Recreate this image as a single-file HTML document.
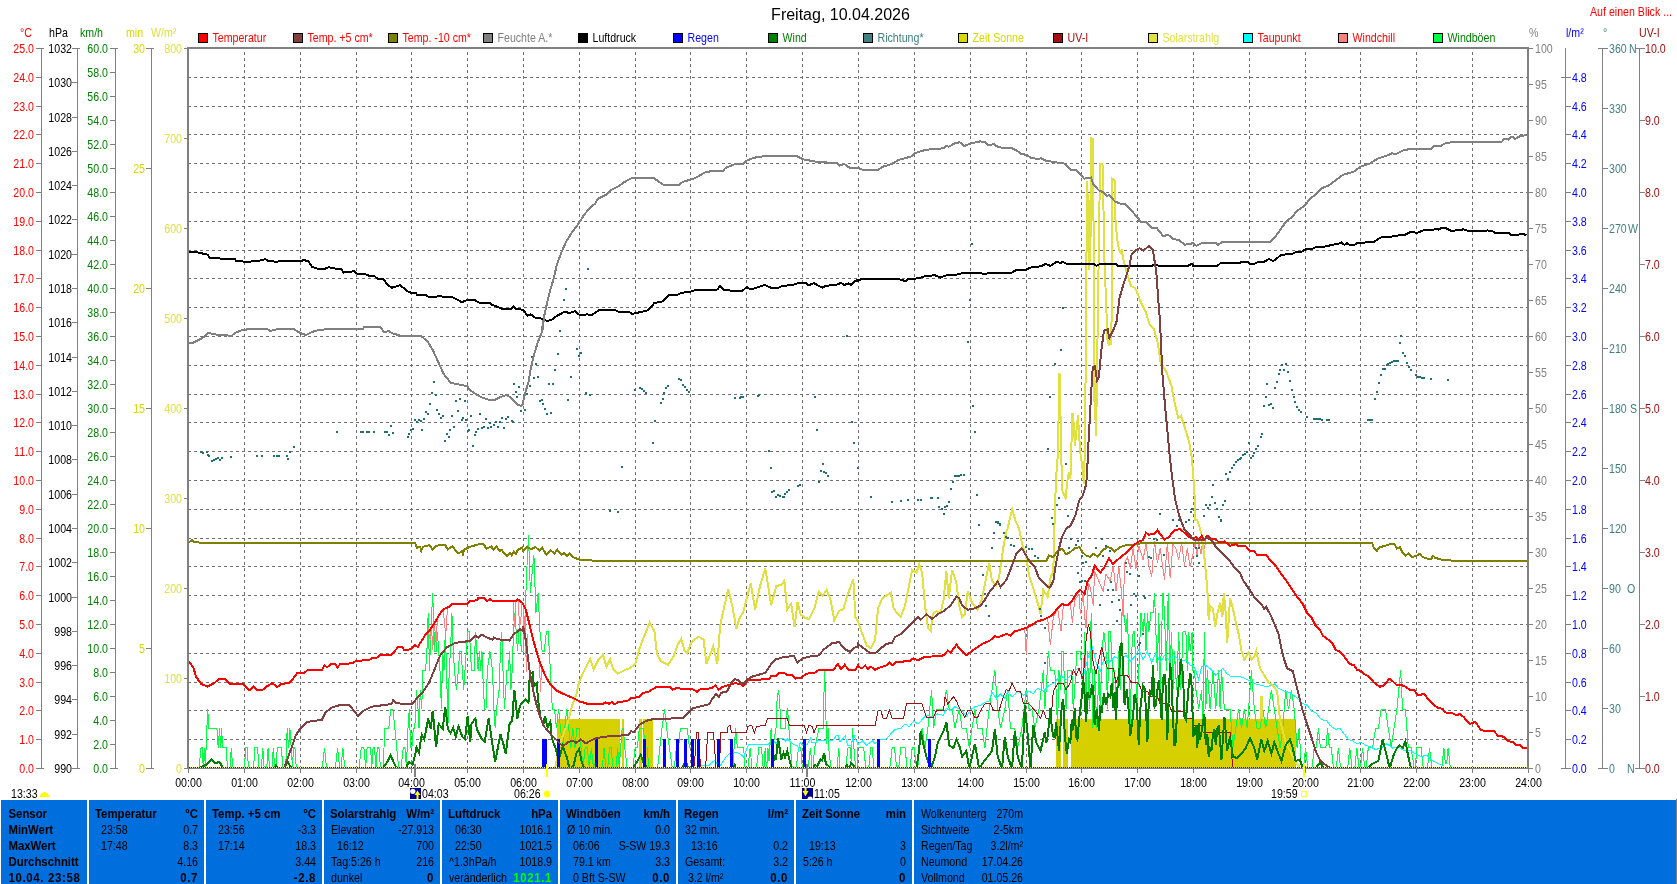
<!DOCTYPE html>
<html lang="de"><head><meta charset="utf-8"><title>Freitag, 10.04.2026</title>
<style>
html,body{margin:0;padding:0;background:#fff;}
body{width:1677px;height:884px;overflow:hidden;font-family:"Liberation Sans",sans-serif;}
svg{display:block;will-change:transform;}
svg text{white-space:pre;}
</style></head><body>
<svg width="1677" height="884" viewBox="0 0 1677 884" font-family='"Liberation Sans", sans-serif' shape-rendering="crispEdges">
<g stroke="#707070" stroke-width="1" stroke-dasharray="3,3">
<line x1="244.5" y1="49" x2="244.5" y2="767" stroke-dashoffset="3"/>
<line x1="300.5" y1="49" x2="300.5" y2="767" stroke-dashoffset="3"/>
<line x1="356.5" y1="49" x2="356.5" y2="767" stroke-dashoffset="3"/>
<line x1="411.5" y1="49" x2="411.5" y2="767" stroke-dashoffset="3"/>
<line x1="467.5" y1="49" x2="467.5" y2="767" stroke-dashoffset="3"/>
<line x1="523.5" y1="49" x2="523.5" y2="767" stroke-dashoffset="3"/>
<line x1="579.5" y1="49" x2="579.5" y2="767" stroke-dashoffset="3"/>
<line x1="635.5" y1="49" x2="635.5" y2="767" stroke-dashoffset="3"/>
<line x1="690.5" y1="49" x2="690.5" y2="767" stroke-dashoffset="3"/>
<line x1="746.5" y1="49" x2="746.5" y2="767" stroke-dashoffset="3"/>
<line x1="802.5" y1="49" x2="802.5" y2="767" stroke-dashoffset="3"/>
<line x1="858.5" y1="49" x2="858.5" y2="767" stroke-dashoffset="3"/>
<line x1="914.5" y1="49" x2="914.5" y2="767" stroke-dashoffset="3"/>
<line x1="970.5" y1="49" x2="970.5" y2="767" stroke-dashoffset="3"/>
<line x1="1026.5" y1="49" x2="1026.5" y2="767" stroke-dashoffset="3"/>
<line x1="1081.5" y1="49" x2="1081.5" y2="767" stroke-dashoffset="3"/>
<line x1="1137.5" y1="49" x2="1137.5" y2="767" stroke-dashoffset="3"/>
<line x1="1193.5" y1="49" x2="1193.5" y2="767" stroke-dashoffset="3"/>
<line x1="1249.5" y1="49" x2="1249.5" y2="767" stroke-dashoffset="3"/>
<line x1="1305.5" y1="49" x2="1305.5" y2="767" stroke-dashoffset="3"/>
<line x1="1360.5" y1="49" x2="1360.5" y2="767" stroke-dashoffset="3"/>
<line x1="1416.5" y1="49" x2="1416.5" y2="767" stroke-dashoffset="3"/>
<line x1="1472.5" y1="49" x2="1472.5" y2="767" stroke-dashoffset="3"/>
<line x1="188" y1="77.5" x2="1527" y2="77.5"/>
<line x1="188" y1="106.5" x2="1527" y2="106.5"/>
<line x1="188" y1="134.5" x2="1527" y2="134.5"/>
<line x1="188" y1="163.5" x2="1527" y2="163.5"/>
<line x1="188" y1="192.5" x2="1527" y2="192.5"/>
<line x1="188" y1="221.5" x2="1527" y2="221.5"/>
<line x1="188" y1="250.5" x2="1527" y2="250.5"/>
<line x1="188" y1="278.5" x2="1527" y2="278.5"/>
<line x1="188" y1="307.5" x2="1527" y2="307.5"/>
<line x1="188" y1="336.5" x2="1527" y2="336.5"/>
<line x1="188" y1="365.5" x2="1527" y2="365.5"/>
<line x1="188" y1="394.5" x2="1527" y2="394.5"/>
<line x1="188" y1="422.5" x2="1527" y2="422.5"/>
<line x1="188" y1="451.5" x2="1527" y2="451.5"/>
<line x1="188" y1="480.5" x2="1527" y2="480.5"/>
<line x1="188" y1="509.5" x2="1527" y2="509.5"/>
<line x1="188" y1="538.5" x2="1527" y2="538.5"/>
<line x1="188" y1="566.5" x2="1527" y2="566.5"/>
<line x1="188" y1="595.5" x2="1527" y2="595.5"/>
<line x1="188" y1="624.5" x2="1527" y2="624.5"/>
<line x1="188" y1="653.5" x2="1527" y2="653.5"/>
<line x1="188" y1="682.5" x2="1527" y2="682.5"/>
<line x1="188" y1="710.5" x2="1527" y2="710.5"/>
<line x1="188" y1="739.5" x2="1527" y2="739.5"/>
</g>
<rect x="557" y="719" width="63" height="48.5" fill="#D6D000"/>
<rect x="621.5" y="719" width="2" height="48.5" fill="#D6D000"/>
<rect x="639" y="719" width="3" height="48.5" fill="#D6D000"/>
<rect x="643" y="719" width="10" height="48.5" fill="#D6D000"/>
<rect x="1056" y="719" width="5" height="48.5" fill="#D6D000"/>
<rect x="1063" y="719" width="4.5" height="48.5" fill="#D6D000"/>
<rect x="1070.5" y="719" width="225.5" height="48.5" fill="#D6D000"/>
<clipPath id="cp"><rect x="189" y="49" width="1338" height="718"/></clipPath>
<g clip-path="url(#cp)">
<polyline points="188,767 199,767 201.1,747.7 202.4,747.7 203.2,767 204.3,747.7 205.3,767 206.9,728.4 207.7,709.1 209,728.4 216.9,728.4 218.2,747.7 219.5,728.4 220.8,747.7 221.6,728.4 222.7,747.7 226.1,747.7 227.4,767 230,767 231.3,747.7 232.6,767 244.4,767 245.8,747.7 247.1,747.7 248.4,767 253.6,767 254.9,747.7 257.6,747.7 258.9,767 261.5,767 262.8,747.7 264.1,767 266.8,767 268.1,747.7 269.4,767 272,767 273.3,747.7 274.6,767 276,767 277.3,747.7 281.2,747.7 283,767 285.7,767 287.2,728.4 288.6,747.7 289.9,728.4 291.2,747.7 292.5,767 293.5,747.7 294.9,747.7 296.2,767 322.4,767 324.5,747.7 326.4,767 335.5,767 337.6,747.7 339.5,767 341.1,767 342.9,747.7 344.7,767 359.2,767 361.3,747.7 363.9,747.7 365.7,767 367.1,747.7 370.5,747.7 371.8,767 373.1,747.7 374.4,747.7 376,767 377.3,747.7 378.9,747.7 380.4,767 383.1,767 384.9,728.4 388.8,728.4 390.7,709.1 392.8,709.1 394.9,728.4 396.7,747.7 398.6,767 401.2,767 403.3,747.7 404.9,747.7 406.4,767 408,728.4 409.3,709.1 410.6,747.7 411.9,747.7 413.3,728.4 414.8,728.4 416.4,689.8 418,709.1 419,728.4 420.3,689.8 421.7,709.1 423,670.5 425.6,670.5 426.9,651.2 428.2,612.6 429.5,670.5 430.8,631.9 432.7,593.3 434,631.9 434.8,651.2 436.1,651.2 437.4,631.9 438.7,651.2 440,670.5 441.4,709.1 442.7,651.2 444,670.5 445.3,631.9 446.6,670.5 447.9,728.4 449.2,670.5 450.5,651.2 451.9,612.6 453.2,651.2 454.5,670.5 456.4,689.8 458.4,670.5 459.7,651.2 461,651.2 462.4,670.5 463.7,689.8 465,670.5 466.3,651.2 467.6,631.9 469.4,631.9 471.5,670.5 474.2,670.5 475.5,631.9 476.8,651.2 478.1,670.5 479.4,651.2 480.7,670.5 482,651.2 483.4,689.8 484.7,709.1 486,709.1 487.3,670.5 489.9,651.2 492.5,670.5 493.9,709.1 495.2,728.4 496.5,709.1 499.1,689.8 500.4,651.2 501.7,631.9 503,670.5 504.4,709.1 505.7,689.8 507,670.5 508.3,670.5 509.6,651.2 510.9,689.8 512.2,670.5 513.5,631.9 514.9,612.6 516.2,631.9 517.5,651.2 518.8,631.9 520.1,631.9 521.4,651.2 522.5,651.2 523,651.2 525.2,612.6 526.6,574 528.5,535.4 530.4,593.3 532,574 533.9,554.7 535.9,612.6 538.1,593.3 540,631.9 542.2,651.2 544.3,651.2 546.3,631.9 548.2,631.9 550.4,670.5 552.3,709.1 554.5,709.1 556.4,728.4 558.6,709.1 560.5,728.4 562.7,747.7 564.6,728.4 566.8,709.1 568.7,728.4 570.9,747.7 572.8,728.4 575,747.7 576.9,728.4 579.1,728.4 581,747.7 583.2,767 585.1,747.7 587.3,747.7 589.2,767 591.4,747.7 593.3,767 594.7,767 596.1,747.7 597.7,767 602.4,767 604,747.7 605.7,767 607.8,767 609.5,747.7 611.1,747.7 612.8,767 616.1,767 617.7,747.7 619.3,767 620.7,747.7 622.1,728.4 623.4,728.4 624.8,747.7 627,767 633,767 635.2,747.7 637.4,747.7 639.3,728.4 643.4,728.4 645.3,747.7 647,747.7 648.9,767 657.7,767 659.8,747.7 662,728.4 664.5,709.1 666.7,728.4 669.4,747.7 672.2,767 674.4,767 676.3,747.7 678.5,747.7 680.4,728.4 687.2,728.4 689.4,747.7 691.3,747.7 693.2,767 733,767 734.1,747.7 735.7,728.4 737.3,747.7 743.7,747.7 744.8,767 748,767 750.2,747.7 751.8,767 756.6,767 758.8,747.7 761.5,747.7 763.1,767 764.1,767 765.2,747.7 766.3,767 766.8,767 767.9,747.7 769,761.2 771.1,728.4 772.7,747.7 774.4,738 776,728.4 777,701.4 778.4,689.8 779.7,701.4 780.8,728.4 785.1,728.4 786.7,711 787.6,709.1 788.9,728.4 790.5,747.7 792.1,767 796.4,767 798.5,747.7 800.7,747.7 802.3,767 808.2,767 810.4,747.7 812,767 813,767 814.7,747.7 819,728.4 823.3,728.4 823.8,701.4 824.5,670.5 825.4,691.7 826.5,743.8 828.1,728.4 828.6,747.7 830.8,767 837.2,767 838.8,747.7 839.9,767 845.8,767 848,747.7 850.1,747.7 851.2,761.2 852.5,728.4 853.9,747.7 855.5,767 857.1,767 857.6,755.4 858,747.7 863.7,747.7 865.7,767 868.8,767 870.8,747.7 872.3,747.7 873.7,767 889.9,767 892.2,747.7 894.5,747.7 896.5,767 898.8,767 900.8,747.7 905,747.7 907,767 910.2,767 912.2,747.7 914.2,747.7 916.4,767 917.9,767 919.3,747.7 922.1,728.4 925,747.7 927.9,728.4 931.6,689.8 933.6,728.4 936.4,709.1 940.7,709.1 943.5,709.1 946.4,689.8 949.2,709.1 952.1,709.1 954.9,728.4 959.2,709.1 962.1,728.4 966.3,728.4 969.2,747.7 972,728.4 974.9,709.1 977.7,728.4 982,728.4 984.9,747.7 989.1,709.1 992,689.8 994.9,670.5 997.7,709.1 1000.6,728.4 1004.8,709.1 1007.7,689.8 1010.5,728.4 1014.8,728.4 1017.7,747.7 1021.9,728.4 1026.2,689.8 1029.1,709.1 1031.9,709.1 1034.8,728.4 1039,709.1 1043.3,670.5 1044.8,709.1 1046.2,689.8 1048.3,651.2 1050.4,670.5 1051.8,670.5 1053.3,670.5 1054.7,670.5 1056.1,689.8 1057.5,728.4 1059,670.5 1060.5,689.8 1061.9,651.2 1063.3,651.2 1064.7,689.8 1066.2,709.1 1067.6,670.5 1069.7,670.5 1071.8,670.5 1073.2,709.1 1074.7,689.8 1076.8,651.2 1079,651.2 1080.4,651.2 1081.8,670.5 1083.2,689.8 1084.7,631.9 1086.1,709.1 1087.5,651.2 1089.3,709.1 1091.2,612.6 1092.9,728.4 1094.6,670.5 1096.8,728.4 1098.9,670.5 1100.3,709.1 1101.8,651.2 1103.9,631.9 1106,651.2 1107.5,709.1 1108.9,631.9 1110.3,631.9 1111.7,651.2 1113.2,689.8 1114.6,670.5 1116.8,709.1 1118.9,651.2 1120.3,689.8 1121.7,612.6 1123.8,612.6 1126,631.9 1127.5,612.6 1128.9,670.5 1130.3,728.4 1131.7,651.2 1133.2,631.9 1134.6,631.9 1136.7,709.1 1138.8,670.5 1140.9,612.6 1143.1,631.9 1144.5,612.6 1146,651.2 1147.4,612.6 1148.8,631.9 1150.9,612.6 1153.1,612.6 1154.5,593.3 1155.9,631.9 1157.3,670.5 1158.8,612.6 1160.2,689.8 1161.6,631.9 1163,593.3 1164.5,612.6 1166.3,670.5 1168.2,593.3 1169.9,670.5 1171.6,631.9 1173,689.8 1174.5,651.2 1176.6,689.8 1178.7,631.9 1180.8,689.8 1183,631.9 1184.5,631.9 1185.9,631.9 1187.3,670.5 1188.7,631.9 1190.4,651.2 1192.1,631.9 1193,670.5 1194.5,670.5 1195.9,689.8 1198.7,709.1 1201.6,689.8 1203,728.4 1204.4,631.9 1205.8,709.1 1207.3,670.5 1210.1,709.1 1213,670.5 1215.8,709.1 1218.7,670.5 1220.1,709.1 1221.5,670.5 1224.4,709.1 1227.2,709.1 1230.1,709.1 1232.9,747.7 1235.8,728.4 1238.6,709.1 1241.5,728.4 1244.3,709.1 1247.2,728.4 1251.4,670.5 1254.3,709.1 1257.1,728.4 1260,728.4 1262.9,709.1 1265.7,728.4 1268.6,709.1 1271.4,689.8 1274.3,709.1 1277.1,728.4 1280,747.7 1282.8,728.4 1285.7,689.8 1288.5,709.1 1291.4,689.8 1294.2,709.1 1297.1,747.7 1299.1,728.4 1301.3,767 1303.6,767 1305.6,747.7 1307.6,767 1312.2,767 1314.2,747.7 1316.2,747.7 1318.4,728.4 1320.4,747.7 1324.1,747.7 1325.9,747.7 1327.6,728.4 1329.3,747.7 1331.3,747.7 1333.3,767 1336.4,767 1338.4,747.7 1340.4,767 1347.8,767 1349.8,747.7 1351.8,767 1354.9,767 1356.9,747.7 1358.9,767 1360.6,767 1362.6,747.7 1364.6,767 1366.3,767 1368.3,747.7 1372.6,747.7 1375.5,728.4 1378.3,728.4 1381.2,709.1 1385.4,709.1 1388.3,728.4 1391.1,747.7 1394,728.4 1396.9,709.1 1398.8,689.8 1400.6,670.5 1402.6,709.1 1405.4,709.1 1408.3,747.7 1411.1,747.7 1414,767 1415.4,767 1416.8,747.7 1421.1,747.7 1423.1,767 1427.6,767 1429.6,747.7 1431.6,767 1441.9,767 1443.9,747.7 1445.3,763.1 1446.7,763.1 1448.2,747.7 1450.2,767 1526.6,767" fill="none" stroke="#00FF40" stroke-width="1" />
<polyline points="425.6,634.5 428.2,629.3 430.1,639.8 431.6,626.6 432.7,650.3 434.3,624 436.1,642.4 437.4,618.8" fill="none" stroke="#FF8080" stroke-width="1" />
<polyline points="443.2,609.6 444.8,626.6 445.8,634.5 447.4,608.8" fill="none" stroke="#FF8080" stroke-width="1" />
<polyline points="513,600.9 514.3,626.6 515.9,600.9" fill="none" stroke="#FF8080" stroke-width="1" />
<polyline points="518.3,600.9 519.6,628 520.9,618.8 521.9,603" fill="none" stroke="#FF8080" stroke-width="1" />
<polyline points="523,603.9 524.1,639.5 525.2,612.1 526.3,672.3 527.9,634" fill="none" stroke="#FF8080" stroke-width="1" />
<polyline points="539.4,661.4 540.5,691.5 541.6,666.8" fill="none" stroke="#FF8080" stroke-width="1" />
<polyline points="1023.4,628.3 1024.8,629.8 1026.2,654 1027.6,628.3" fill="none" stroke="#FF8080" stroke-width="1" />
<polyline points="1044.7,619.2 1047.6,618.4 1050.4,645.4 1053.3,616.9 1057.6,608.4 1061,631.2 1063.3,605.5 1070.4,604.1 1072.4,622.6 1074.7,599.8 1079,594.1 1080.4,614.1 1083.2,592.7 1084.7,616.9 1086.1,628.3 1088.4,582.7 1090.4,588.4 1093.2,605.5 1094.6,571.3 1098.9,581.3 1103.2,591.3 1106,574.2 1110.3,581.3 1113.2,565.6 1116,591.3 1118.9,567 1121.7,594.1 1123.1,616.9 1124.6,562.8 1127.4,557.1 1130.3,568.5 1133.1,548.5 1136,568.5 1138.8,545.7 1143.1,559.9 1146,542.8 1148.8,565.6 1151.7,577 1154.5,541.4 1157.4,562.8 1160.2,548.5 1164.5,579.9 1167.3,542.8 1170.2,578.4 1173,544.2 1175.9,548.5 1178.7,559.9 1181.6,542.8 1184.4,565.6 1187.3,548.5 1190.1,567 1193,554.2" fill="none" stroke="#FF8080" stroke-width="1" />
<polyline points="1193,554.2 1195.3,540 1197,557.1 1198.7,541.4 1201,554.2 1202.7,540 1204.4,548.5 1206.1,540" fill="none" stroke="#FF8080" stroke-width="1" />
<polyline points="700.7,765.4 709.3,765.4 711.5,762.7 715.3,760.1 716.3,762.7 720.1,766 722.2,762.7 725.5,757.4 728.7,754.1 733,753.1 736.2,752 740.5,754.1 743.7,757.4 745.9,750.9 748.6,744.5 768.4,744.5 770.6,741.3 772.7,740.2 776,743.4 779.7,738.6 783.5,738.6 785.6,741.3 787.3,738.6 791,742.3 793.2,744.5 797.5,745.6 798.5,748.8 800.1,742.3 802.8,745.6 807.1,744.5 810.4,738.6 812,742.9 815.7,742.9 817.3,740.7 832.9,740.2 836.7,735.3 838.3,735.9 839.9,741.8 845.3,735.9 847.4,745 851.2,745 853.9,735.3 858.2,745 858,743.8 862.3,741 866.6,745.2 872.3,741 875.1,743.8 879.4,739.5 886.5,739 890.8,733.8 895.1,729.6 900.8,728.1 905,723.9 909.3,726.7 913.6,721 917.9,723.9 922.1,719.6 926.4,715.3 932.1,716.7 937.8,713.9 943.5,715.3 946.4,708.2 950.7,711 954.9,706.7 962.1,711 966.3,716.7 970.6,709.6 974.9,706.7 980.6,705.3 984.9,702.5 989.1,701 992,692.5 996.3,698.2 1000.6,693.9 1004.8,698.2 1007.7,691.1 1012,696.8 1017.7,691.1 1023.4,695.3 1029.1,691.1 1033.3,693.9 1037.6,688.2 1043.3,691.1 1049,685.4 1054.7,682.5 1060.4,675.4 1066.1,679.7 1071.8,674 1077.5,668.3 1083.2,676.8 1087.5,659.7 1091.8,645.4 1096.1,662.6 1100.3,671.1 1104.6,656.9 1108.9,662.6 1114.6,656.9 1120.3,659.7 1126,655.4 1130.3,661.1 1134.6,656.9 1138.8,649.7 1143.1,659.7 1147.4,651.1 1151.7,662.6 1155.9,652.6 1160.2,662.6 1164.5,655.4 1168.8,659.7 1174.5,655.4 1180.2,661.1 1185.9,659.7 1190.1,665.4 1193,665.4 1193,665.4 1195.9,671.1 1198.7,679.7 1201.6,666.8 1205.8,665.4 1211.5,669.7 1215.8,675.4 1220.1,671.1 1222.9,668.3 1227.2,674 1231.5,676.8 1238.6,676.2 1244.3,678.2 1250,681.1 1255.7,683.9 1261.4,685.4 1267.1,686.8 1274.3,683.9 1278.5,688.2 1284.2,691.1 1289.9,692.5 1295.6,696.8 1301.3,702.5 1307,705.3 1311.3,711 1315.6,712.4 1321.3,719.6 1327,721 1329.9,725.3 1335.6,729.6 1339.8,728.1 1344.1,733.8 1348.4,739.5 1352.7,741 1356.9,743.8 1361.2,742.4 1365.5,745.2 1369.8,746.7 1375.5,749.5 1381.2,748.1 1386.9,743.8 1392.6,748.1 1398.3,746.7 1404,750.9 1409.7,750.4 1415.4,753.8 1421.1,756.6 1426.8,755.2 1432.5,760.9 1438.2,763.8 1443.9,765.8" fill="none" stroke="#00FFFF" stroke-width="1" />
<polyline points="555.3,767 559.9,743.5 568.2,721.6 572.3,705.2 576.4,694.2 579.1,681.9 584.6,669.6 590.1,658.6 593.6,669.6 598.3,660 602.9,654.5 606.5,666.8 610,659.2 613.3,669.6 617.4,673.7 621.5,671.8 625.6,669.6 629.7,668.2 635.2,664.1 639.3,649.1 643.4,638.1 649.7,622.5 654.4,631.3 657.1,654.5 661.2,661.4 668.1,664.7 673.5,656.4 677.6,645 681.2,638.9 684.5,650.4 687.2,653.2 691.3,642.2 698.2,636.7 703.6,639.5 706.4,664.1 713.2,646.3 717.3,664.1 720.1,625.8 724.2,606.6 728.3,588.8 732.4,606.6 736.5,629.1 739.2,619 743.3,612.1 747.4,595.7 750.7,583.4 755.1,609.4 759.7,587.5 765.2,568.3 768,584.7 771.2,605.3 776.2,586.1 781.6,584.7 784.4,580.6 787.1,609.4 791.2,603.9 794.5,627.2 797.5,602.5 800.8,614.8 804.9,617.6 809,619 814.5,608 818.6,591.6 822.7,595.7 826.8,589.7 830.9,601.2 834.2,620.3 839.1,610.7 843.2,609.4 847.3,595.7 853.3,579.3 855.5,617.6 857.5,620.3 858,621.2 862.3,634 866.6,645.4 870.8,648.3 875.1,639.7 878,608.4 882.2,598.4 886.5,595.6 890.8,592.7 893.6,608.4 897.9,614.1 900.8,616.9 905,605.5 907.9,591.3 912.2,569.9 916.4,572.7 919.3,564.2 922.1,572.7 925,605.5 927.9,628.3 930.7,631.2 932.7,614.1 936.4,611.2 940.7,612.7 943.5,599.8 946.4,571.3 948.7,598.4 952.1,569.9 956.4,582.7 959.2,605.5 962.1,616.9 964.9,614.1 967.8,591.3 972,602.7 977.7,609.8 982,598.4 986.3,577 989.1,562.8 992,581.3 996.3,585.6 999.1,577 1003.4,547.1 1006.3,531.4 1007.3,530 1010,518 1012.2,509.4 1015.5,520.8 1019.1,528.6 1021.9,542.8 1026.2,557.1 1029.1,575.6 1033.3,588.4 1037.6,602.7 1040.5,614.1 1043.3,589.9 1047.6,597 1050.4,578.4 1053.3,571.3 1054.2,537.1 1054.6,520 1056,479 1058,453 1058.6,415 1059.5,373 1060.5,415 1061.4,462 1062.5,491 1065.6,498 1067.3,481 1069,472 1070.4,479 1071.6,439 1072.5,413 1073.7,424 1075,446 1076.3,432 1078,415 1079,434 1080.4,453 1082.3,467 1084,484 1085,439 1086,330 1087,181 1088,205 1089,270 1089.6,200 1090.4,262 1091,138 1093,139 1094,300 1094.6,420 1095.2,380 1096,436 1097,380 1098,300 1099,240 1100,164 1102.5,164 1103.5,210 1104.5,262 1106,300 1107.5,340 1109,346 1110,340 1111,345 1112,300 1112.5,179 1114.5,180 1115.5,220 1117,238 1119,250 1121,253 1122,249 1123,258 1126.5,272 1131,286 1135,288 1136.2,290 1140.3,301 1145.7,312 1149.8,325 1153.9,329 1158,344 1160.7,363 1166,371 1171.5,386 1174.2,401 1178.3,418 1181,416 1185,428 1189.2,442 1191.9,458 1193,472 1194.4,491 1195.2,520 1197.3,520 1201.6,534.3 1204.4,557.1 1207.3,588.4 1208.7,619.8 1210.1,605.5 1213,608.4 1215.2,626.9 1217.2,614.1 1220.1,602.7 1222.4,616.9 1223.8,592.7 1225.8,614.1 1227.2,642.6 1230.1,598.4 1232.9,608.4 1235.8,622.6 1238.6,634 1241.5,651.1 1244.3,659.7 1248.6,652.6 1251.4,659.7 1254.3,656.9 1256.3,651.1 1260,668.3 1264.3,675.4 1268.6,682.5 1272.8,685.4 1277.1,691.1 1278.5,705.3 1280,719.6 1282.8,731 1285.7,742.4 1289.9,750.9 1292.8,756.6 1295.6,762.3 1299.9,766.9" fill="none" stroke="#E0E040" stroke-width="2" />
<rect x="1260" y="696" width="3" height="23" fill="#E0E040"/>
<polyline points="693.8,767.6 694.8,759.5 696.4,732.7 698.6,732.7 699.7,755.2 700.7,767.6 705.6,767.6 706.1,759.5 707.7,732.7 713.1,732.7 714.5,744.5 715.8,767.6 719.6,767.6 720.6,732.7 727.1,732.7 728.1,726.2 730.3,725.7 731.4,732.7 746.4,732.7 748,726.2 751.8,725.7 754.5,732.7 756.6,726.2 765.2,725.7 767.4,718.7 787.3,718.5 789.4,725.7 804.4,725.7 806.6,732.7 808.7,725.7 812,726.2 814.1,732.7 816.8,725.7 857.6,725.7 858,725.3 875.1,725.3 878,711 880.8,710.5 883.1,718.1 886.5,718.1 889.4,710.5 892.2,718.1 903.6,718.1 906.5,703.9 922.1,703.9 926.4,717.3 933.6,717.3 936.4,710.5 943.5,710.5 945,696.8 947.8,703.9 953.5,696.8 956.4,701 960.6,710.5 964.9,717.3 967.8,710.5 972,711 974.9,718.1 977.7,717.3 980.6,710.5 984.9,703.9 990.6,703.9 993.4,710.5 999.1,710.5 1003.4,696.8 1006.3,689.6 1009.1,691.1 1012,683.1 1016.2,691.1 1020.5,691.1 1023.4,703.9 1029.1,703.9 1034.8,710.5 1040.5,718.1 1043.3,710.5 1046.2,718.1 1049,718.1 1051.9,708.2 1053.3,691.1 1057.6,683.9 1063.3,683.9 1066.1,689.6 1070.4,682.5 1073.3,669.7 1076.1,675.4 1079,668.3 1083.2,679.7 1086.1,639.7 1088.4,624.1 1090.4,632.6 1093.2,662.6 1096.1,674 1098.9,659.7 1101.8,646.9 1104.6,659.7 1107.5,668.3 1113.2,668.3 1116,682.5 1118.9,675.4 1127.4,675.4 1131.7,682.5 1138.8,683.1 1141.7,691.1 1147.4,691.1 1150.2,696.8 1157.4,696.8 1160.2,703.9 1168.8,703.9 1171.6,711 1183,711 1185.9,718.1 1193,718.1 1193,725.8 1201.6,725.8 1203,732.4 1230.1,732.4 1231.5,745.2 1232.3,766.9" fill="none" stroke="#A01010" stroke-width="1" />
<g fill="#207070">
<rect x="433" y="381" width="2" height="2"/>
<rect x="431" y="392" width="2" height="2"/>
<rect x="435" y="394" width="2" height="2"/>
<rect x="459" y="398" width="2" height="2"/>
<rect x="513" y="383" width="2" height="2"/>
<rect x="518" y="386" width="2" height="2"/>
<rect x="515" y="391" width="2" height="2"/>
<rect x="516" y="396" width="2" height="2"/>
<rect x="200" y="451" width="2" height="2"/>
<rect x="202" y="452" width="2" height="2"/>
<rect x="206" y="451" width="2" height="2"/>
<rect x="207" y="454" width="2" height="2"/>
<rect x="208" y="455" width="2" height="2"/>
<rect x="211" y="460" width="2" height="2"/>
<rect x="213" y="459" width="2" height="2"/>
<rect x="215" y="458" width="2" height="2"/>
<rect x="217" y="457" width="2" height="2"/>
<rect x="219" y="459" width="2" height="2"/>
<rect x="221" y="457" width="2" height="2"/>
<rect x="230" y="456" width="2" height="2"/>
<rect x="256" y="455" width="2" height="2"/>
<rect x="261" y="455" width="2" height="2"/>
<rect x="273" y="455" width="2" height="2"/>
<rect x="276" y="455" width="2" height="2"/>
<rect x="278" y="455" width="2" height="2"/>
<rect x="286" y="455" width="2" height="2"/>
<rect x="287" y="458" width="2" height="2"/>
<rect x="289" y="451" width="2" height="2"/>
<rect x="293" y="446" width="2" height="2"/>
<rect x="336" y="431" width="2" height="2"/>
<rect x="360" y="431" width="2" height="2"/>
<rect x="362" y="431" width="2" height="2"/>
<rect x="366" y="431" width="2" height="2"/>
<rect x="368" y="431" width="2" height="2"/>
<rect x="373" y="431" width="2" height="2"/>
<rect x="384" y="431" width="2" height="2"/>
<rect x="386" y="431" width="2" height="2"/>
<rect x="388" y="434" width="2" height="2"/>
<rect x="390" y="425" width="2" height="2"/>
<rect x="392" y="432" width="2" height="2"/>
<rect x="407" y="436" width="2" height="2"/>
<rect x="408" y="433" width="2" height="2"/>
<rect x="410" y="429" width="2" height="2"/>
<rect x="412" y="428" width="2" height="2"/>
<rect x="414" y="419" width="2" height="2"/>
<rect x="416" y="421" width="2" height="2"/>
<rect x="418" y="419" width="2" height="2"/>
<rect x="420" y="420" width="2" height="2"/>
<rect x="421" y="429" width="2" height="2"/>
<rect x="423" y="418" width="2" height="2"/>
<rect x="425" y="411" width="2" height="2"/>
<rect x="427" y="413" width="2" height="2"/>
<rect x="429" y="403" width="2" height="2"/>
<rect x="436" y="409" width="2" height="2"/>
<rect x="438" y="413" width="2" height="2"/>
<rect x="440" y="417" width="2" height="2"/>
<rect x="442" y="415" width="2" height="2"/>
<rect x="444" y="440" width="2" height="2"/>
<rect x="446" y="433" width="2" height="2"/>
<rect x="448" y="436" width="2" height="2"/>
<rect x="449" y="429" width="2" height="2"/>
<rect x="451" y="415" width="2" height="2"/>
<rect x="453" y="426" width="2" height="2"/>
<rect x="455" y="400" width="2" height="2"/>
<rect x="457" y="410" width="2" height="2"/>
<rect x="459" y="398" width="2" height="2"/>
<rect x="461" y="419" width="2" height="2"/>
<rect x="462" y="417" width="2" height="2"/>
<rect x="464" y="400" width="2" height="2"/>
<rect x="465" y="419" width="2" height="2"/>
<rect x="467" y="430" width="2" height="2"/>
<rect x="468" y="429" width="2" height="2"/>
<rect x="470" y="415" width="2" height="2"/>
<rect x="472" y="445" width="2" height="2"/>
<rect x="474" y="434" width="2" height="2"/>
<rect x="475" y="431" width="2" height="2"/>
<rect x="477" y="428" width="2" height="2"/>
<rect x="479" y="413" width="2" height="2"/>
<rect x="481" y="427" width="2" height="2"/>
<rect x="483" y="426" width="2" height="2"/>
<rect x="485" y="418" width="2" height="2"/>
<rect x="487" y="427" width="2" height="2"/>
<rect x="489" y="422" width="2" height="2"/>
<rect x="490" y="426" width="2" height="2"/>
<rect x="493" y="424" width="2" height="2"/>
<rect x="495" y="421" width="2" height="2"/>
<rect x="497" y="426" width="2" height="2"/>
<rect x="499" y="421" width="2" height="2"/>
<rect x="501" y="417" width="2" height="2"/>
<rect x="503" y="427" width="2" height="2"/>
<rect x="505" y="418" width="2" height="2"/>
<rect x="507" y="416" width="2" height="2"/>
<rect x="511" y="420" width="2" height="2"/>
<rect x="512" y="421" width="2" height="2"/>
<rect x="515" y="391" width="2" height="2"/>
<rect x="516" y="396" width="2" height="2"/>
<rect x="520" y="410" width="2" height="2"/>
<rect x="587" y="268" width="2" height="2"/>
<rect x="565" y="288" width="2" height="2"/>
<rect x="563" y="299" width="2" height="2"/>
<rect x="559" y="330" width="2" height="2"/>
<rect x="557" y="353" width="2" height="2"/>
<rect x="576" y="348" width="2" height="2"/>
<rect x="580" y="352" width="2" height="2"/>
<rect x="578" y="355" width="2" height="2"/>
<rect x="531" y="356" width="2" height="2"/>
<rect x="535" y="363" width="2" height="2"/>
<rect x="554" y="369" width="2" height="2"/>
<rect x="570" y="376" width="2" height="2"/>
<rect x="533" y="377" width="2" height="2"/>
<rect x="537" y="376" width="2" height="2"/>
<rect x="548" y="383" width="2" height="2"/>
<rect x="552" y="383" width="2" height="2"/>
<rect x="529" y="385" width="2" height="2"/>
<rect x="526" y="393" width="2" height="2"/>
<rect x="585" y="392" width="2" height="2"/>
<rect x="589" y="394" width="2" height="2"/>
<rect x="567" y="399" width="2" height="2"/>
<rect x="539" y="400" width="2" height="2"/>
<rect x="541" y="399" width="2" height="2"/>
<rect x="542" y="403" width="2" height="2"/>
<rect x="544" y="408" width="2" height="2"/>
<rect x="524" y="409" width="2" height="2"/>
<rect x="546" y="413" width="2" height="2"/>
<rect x="550" y="412" width="2" height="2"/>
<rect x="634" y="389" width="2" height="2"/>
<rect x="639" y="387" width="2" height="2"/>
<rect x="641" y="388" width="2" height="2"/>
<rect x="643" y="390" width="2" height="2"/>
<rect x="645" y="392" width="2" height="2"/>
<rect x="654" y="420" width="2" height="2"/>
<rect x="652" y="442" width="2" height="2"/>
<rect x="660" y="402" width="2" height="2"/>
<rect x="662" y="398" width="2" height="2"/>
<rect x="663" y="392" width="2" height="2"/>
<rect x="665" y="387" width="2" height="2"/>
<rect x="667" y="385" width="2" height="2"/>
<rect x="678" y="378" width="2" height="2"/>
<rect x="680" y="379" width="2" height="2"/>
<rect x="682" y="384" width="2" height="2"/>
<rect x="684" y="386" width="2" height="2"/>
<rect x="686" y="389" width="2" height="2"/>
<rect x="688" y="391" width="2" height="2"/>
<rect x="621" y="466" width="2" height="2"/>
<rect x="609" y="510" width="2" height="2"/>
<rect x="617" y="511" width="2" height="2"/>
<rect x="734" y="397" width="2" height="2"/>
<rect x="739" y="397" width="2" height="2"/>
<rect x="740" y="396" width="2" height="2"/>
<rect x="742" y="396" width="2" height="2"/>
<rect x="757" y="395" width="2" height="2"/>
<rect x="758" y="394" width="2" height="2"/>
<rect x="768" y="450" width="2" height="2"/>
<rect x="770" y="467" width="2" height="2"/>
<rect x="771" y="491" width="2" height="2"/>
<rect x="773" y="490" width="2" height="2"/>
<rect x="775" y="496" width="2" height="2"/>
<rect x="777" y="494" width="2" height="2"/>
<rect x="779" y="495" width="2" height="2"/>
<rect x="782" y="496" width="2" height="2"/>
<rect x="783" y="496" width="2" height="2"/>
<rect x="784" y="493" width="2" height="2"/>
<rect x="786" y="491" width="2" height="2"/>
<rect x="788" y="489" width="2" height="2"/>
<rect x="797" y="485" width="2" height="2"/>
<rect x="799" y="484" width="2" height="2"/>
<rect x="814" y="396" width="2" height="2"/>
<rect x="816" y="429" width="2" height="2"/>
<rect x="818" y="481" width="2" height="2"/>
<rect x="820" y="470" width="2" height="2"/>
<rect x="822" y="463" width="2" height="2"/>
<rect x="823" y="471" width="2" height="2"/>
<rect x="825" y="472" width="2" height="2"/>
<rect x="827" y="475" width="2" height="2"/>
<rect x="846" y="335" width="2" height="2"/>
<rect x="851" y="421" width="2" height="2"/>
<rect x="853" y="442" width="2" height="2"/>
<rect x="857" y="467" width="2" height="2"/>
<rect x="971" y="243" width="2" height="2"/>
<rect x="969" y="299" width="2" height="2"/>
<rect x="967" y="341" width="2" height="2"/>
<rect x="972" y="405" width="2" height="2"/>
<rect x="974" y="431" width="2" height="2"/>
<rect x="976" y="494" width="2" height="2"/>
<rect x="978" y="524" width="2" height="2"/>
<rect x="870" y="496" width="2" height="2"/>
<rect x="891" y="501" width="2" height="2"/>
<rect x="900" y="500" width="2" height="2"/>
<rect x="907" y="499" width="2" height="2"/>
<rect x="917" y="499" width="2" height="2"/>
<rect x="920" y="499" width="2" height="2"/>
<rect x="930" y="497" width="2" height="2"/>
<rect x="931" y="497" width="2" height="2"/>
<rect x="937" y="497" width="2" height="2"/>
<rect x="938" y="506" width="2" height="2"/>
<rect x="941" y="508" width="2" height="2"/>
<rect x="943" y="513" width="2" height="2"/>
<rect x="944" y="506" width="2" height="2"/>
<rect x="946" y="505" width="2" height="2"/>
<rect x="948" y="501" width="2" height="2"/>
<rect x="950" y="488" width="2" height="2"/>
<rect x="952" y="481" width="2" height="2"/>
<rect x="954" y="475" width="2" height="2"/>
<rect x="956" y="475" width="2" height="2"/>
<rect x="958" y="475" width="2" height="2"/>
<rect x="960" y="474" width="2" height="2"/>
<rect x="963" y="474" width="2" height="2"/>
<rect x="857" y="467" width="2" height="2"/>
<rect x="995" y="521" width="2" height="2"/>
<rect x="997" y="521" width="2" height="2"/>
<rect x="999" y="524" width="2" height="2"/>
<rect x="1062" y="307" width="2" height="2"/>
<rect x="1060" y="349" width="2" height="2"/>
<rect x="1054" y="363" width="2" height="2"/>
<rect x="1049" y="396" width="2" height="2"/>
<rect x="1047" y="448" width="2" height="2"/>
<rect x="1065" y="463" width="2" height="2"/>
<rect x="1058" y="497" width="2" height="2"/>
<rect x="1056" y="504" width="2" height="2"/>
<rect x="1051" y="517" width="2" height="2"/>
<rect x="1052" y="523" width="2" height="2"/>
<rect x="1067" y="515" width="2" height="2"/>
<rect x="1159" y="513" width="2" height="2"/>
<rect x="1172" y="519" width="2" height="2"/>
<rect x="1179" y="519" width="2" height="2"/>
<rect x="1185" y="521" width="2" height="2"/>
<rect x="1188" y="519" width="2" height="2"/>
<rect x="1190" y="511" width="2" height="2"/>
<rect x="1191" y="508" width="2" height="2"/>
<rect x="978" y="524" width="2" height="2"/>
<rect x="997" y="522" width="2" height="2"/>
<rect x="999" y="523" width="2" height="2"/>
<rect x="993" y="532" width="2" height="2"/>
<rect x="1003" y="532" width="2" height="2"/>
<rect x="1005" y="536" width="2" height="2"/>
<rect x="1007" y="537" width="2" height="2"/>
<rect x="1010" y="544" width="2" height="2"/>
<rect x="1013" y="545" width="2" height="2"/>
<rect x="991" y="547" width="2" height="2"/>
<rect x="1025" y="546" width="2" height="2"/>
<rect x="1028" y="548" width="2" height="2"/>
<rect x="1031" y="548" width="2" height="2"/>
<rect x="1034" y="555" width="2" height="2"/>
<rect x="1037" y="557" width="2" height="2"/>
<rect x="982" y="574" width="2" height="2"/>
<rect x="984" y="593" width="2" height="2"/>
<rect x="985" y="605" width="2" height="2"/>
<rect x="988" y="615" width="2" height="2"/>
<rect x="1039" y="608" width="2" height="2"/>
<rect x="1040" y="615" width="2" height="2"/>
<rect x="1044" y="627" width="2" height="2"/>
<rect x="1044" y="662" width="2" height="2"/>
<rect x="1052" y="523" width="2" height="2"/>
<rect x="1070" y="538" width="2" height="2"/>
<rect x="1077" y="540" width="2" height="2"/>
<rect x="1068" y="547" width="2" height="2"/>
<rect x="1075" y="544" width="2" height="2"/>
<rect x="1095" y="547" width="2" height="2"/>
<rect x="1101" y="538" width="2" height="2"/>
<rect x="1105" y="545" width="2" height="2"/>
<rect x="1102" y="555" width="2" height="2"/>
<rect x="1108" y="557" width="2" height="2"/>
<rect x="1109" y="550" width="2" height="2"/>
<rect x="1081" y="555" width="2" height="2"/>
<rect x="1082" y="562" width="2" height="2"/>
<rect x="1085" y="561" width="2" height="2"/>
<rect x="1077" y="572" width="2" height="2"/>
<rect x="1079" y="581" width="2" height="2"/>
<rect x="1081" y="580" width="2" height="2"/>
<rect x="1084" y="580" width="2" height="2"/>
<rect x="1090" y="575" width="2" height="2"/>
<rect x="1110" y="581" width="2" height="2"/>
<rect x="1112" y="589" width="2" height="2"/>
<rect x="1107" y="589" width="2" height="2"/>
<rect x="1099" y="604" width="2" height="2"/>
<rect x="1111" y="601" width="2" height="2"/>
<rect x="1118" y="599" width="2" height="2"/>
<rect x="1119" y="609" width="2" height="2"/>
<rect x="1116" y="620" width="2" height="2"/>
<rect x="1125" y="562" width="2" height="2"/>
<rect x="1126" y="571" width="2" height="2"/>
<rect x="1129" y="573" width="2" height="2"/>
<rect x="1133" y="593" width="2" height="2"/>
<rect x="1135" y="595" width="2" height="2"/>
<rect x="1130" y="604" width="2" height="2"/>
<rect x="1138" y="575" width="2" height="2"/>
<rect x="1143" y="595" width="2" height="2"/>
<rect x="1144" y="597" width="2" height="2"/>
<rect x="1148" y="556" width="2" height="2"/>
<rect x="1150" y="557" width="2" height="2"/>
<rect x="1153" y="538" width="2" height="2"/>
<rect x="1156" y="539" width="2" height="2"/>
<rect x="1163" y="554" width="2" height="2"/>
<rect x="1142" y="633" width="2" height="2"/>
<rect x="1139" y="642" width="2" height="2"/>
<rect x="1138" y="644" width="2" height="2"/>
<rect x="1178" y="519" width="2" height="2"/>
<rect x="1176" y="525" width="2" height="2"/>
<rect x="1203" y="515" width="2" height="2"/>
<rect x="1205" y="504" width="2" height="2"/>
<rect x="1207" y="507" width="2" height="2"/>
<rect x="1209" y="504" width="2" height="2"/>
<rect x="1211" y="496" width="2" height="2"/>
<rect x="1212" y="484" width="2" height="2"/>
<rect x="1214" y="502" width="2" height="2"/>
<rect x="1216" y="508" width="2" height="2"/>
<rect x="1218" y="516" width="2" height="2"/>
<rect x="1220" y="520" width="2" height="2"/>
<rect x="1222" y="504" width="2" height="2"/>
<rect x="1224" y="500" width="2" height="2"/>
<rect x="1225" y="473" width="2" height="2"/>
<rect x="1227" y="478" width="2" height="2"/>
<rect x="1229" y="471" width="2" height="2"/>
<rect x="1231" y="467" width="2" height="2"/>
<rect x="1233" y="464" width="2" height="2"/>
<rect x="1235" y="461" width="2" height="2"/>
<rect x="1237" y="459" width="2" height="2"/>
<rect x="1239" y="458" width="2" height="2"/>
<rect x="1240" y="457" width="2" height="2"/>
<rect x="1242" y="454" width="2" height="2"/>
<rect x="1244" y="453" width="2" height="2"/>
<rect x="1246" y="451" width="2" height="2"/>
<rect x="1248" y="442" width="2" height="2"/>
<rect x="1250" y="457" width="2" height="2"/>
<rect x="1252" y="455" width="2" height="2"/>
<rect x="1253" y="452" width="2" height="2"/>
<rect x="1255" y="448" width="2" height="2"/>
<rect x="1257" y="445" width="2" height="2"/>
<rect x="1260" y="436" width="2" height="2"/>
<rect x="1261" y="433" width="2" height="2"/>
<rect x="1263" y="405" width="2" height="2"/>
<rect x="1265" y="396" width="2" height="2"/>
<rect x="1266" y="383" width="2" height="2"/>
<rect x="1268" y="404" width="2" height="2"/>
<rect x="1270" y="403" width="2" height="2"/>
<rect x="1272" y="407" width="2" height="2"/>
<rect x="1274" y="387" width="2" height="2"/>
<rect x="1276" y="381" width="2" height="2"/>
<rect x="1278" y="373" width="2" height="2"/>
<rect x="1279" y="369" width="2" height="2"/>
<rect x="1281" y="364" width="2" height="2"/>
<rect x="1283" y="369" width="2" height="2"/>
<rect x="1285" y="363" width="2" height="2"/>
<rect x="1287" y="371" width="2" height="2"/>
<rect x="1289" y="380" width="2" height="2"/>
<rect x="1291" y="389" width="2" height="2"/>
<rect x="1293" y="396" width="2" height="2"/>
<rect x="1294" y="401" width="2" height="2"/>
<rect x="1296" y="406" width="2" height="2"/>
<rect x="1298" y="409" width="2" height="2"/>
<rect x="1300" y="411" width="2" height="2"/>
<rect x="1306" y="416" width="2" height="2"/>
<rect x="1313" y="418" width="2" height="2"/>
<rect x="1315" y="418" width="2" height="2"/>
<rect x="1317" y="418" width="2" height="2"/>
<rect x="1319" y="418" width="2" height="2"/>
<rect x="1321" y="419" width="2" height="2"/>
<rect x="1326" y="419" width="2" height="2"/>
<rect x="1328" y="419" width="2" height="2"/>
<rect x="1367" y="419" width="2" height="2"/>
<rect x="1369" y="419" width="2" height="2"/>
<rect x="1371" y="419" width="2" height="2"/>
<rect x="1374" y="398" width="2" height="2"/>
<rect x="1376" y="391" width="2" height="2"/>
<rect x="1378" y="382" width="2" height="2"/>
<rect x="1380" y="374" width="2" height="2"/>
<rect x="1382" y="368" width="2" height="2"/>
<rect x="1384" y="368" width="2" height="2"/>
<rect x="1386" y="364" width="2" height="2"/>
<rect x="1387" y="363" width="2" height="2"/>
<rect x="1389" y="362" width="2" height="2"/>
<rect x="1391" y="361" width="2" height="2"/>
<rect x="1393" y="360" width="2" height="2"/>
<rect x="1395" y="360" width="2" height="2"/>
<rect x="1397" y="360" width="2" height="2"/>
<rect x="1399" y="342" width="2" height="2"/>
<rect x="1400" y="335" width="2" height="2"/>
<rect x="1402" y="352" width="2" height="2"/>
<rect x="1404" y="355" width="2" height="2"/>
<rect x="1406" y="362" width="2" height="2"/>
<rect x="1408" y="366" width="2" height="2"/>
<rect x="1410" y="369" width="2" height="2"/>
<rect x="1415" y="374" width="2" height="2"/>
<rect x="1417" y="376" width="2" height="2"/>
<rect x="1419" y="376" width="2" height="2"/>
<rect x="1421" y="377" width="2" height="2"/>
<rect x="1423" y="377" width="2" height="2"/>
<rect x="1430" y="378" width="2" height="2"/>
<rect x="1447" y="379" width="2" height="2"/>
<rect x="1220" y="519" width="2" height="2"/>
<rect x="1195" y="547" width="2" height="2"/>
<rect x="1198" y="547" width="2" height="2"/>
<rect x="1196" y="555" width="2" height="2"/>
<rect x="1198" y="562" width="2" height="2"/>
</g>
<polyline points="188,768.6 198.5,768.6 206.4,764.5 211.6,759.2 215.6,763.2 219.5,761.8 223.4,768.6 273.3,768.6 276,765.3 278.6,768.6 283.8,768.6 287.8,761.8 291.7,768.6 382.3,768.6 387.5,761.8 390.7,755.3 394.1,763.2 396.7,768.6 405.9,768.6 408.5,761.8 412.5,764.5 415.1,755.3 416.4,747.4 419,752.7 421.7,734.3 424.3,739.5 428.2,718.5 430.8,729 432.7,710.7 436.1,747.4 438.7,723.8 442.7,729 445.3,706.7 447.9,729 450.5,733 453.2,727.7 455.8,736.9 458.4,726.4 462.4,736.9 465,739.5 467.6,715.9 470.2,742.2 471.5,723.8 475.5,718.5 476.8,729 482,739.5 484.7,742.2 488.6,718.5 492.5,744.8 495.2,761.8 500.4,734.3 503,742.2 505.7,754 509.6,723.8 512.2,721.2 514.3,689.6 517.5,718.5 520.1,705.4 522.5,702.8 523,702.4 525.7,699.7 528.5,702.4 529.8,673.7 532.6,672.3 533.9,686 536.7,683.3 538.1,699.7 540.8,718.8 543.5,724.3 544.9,716.1 547.6,727.1 550.4,721.6 551.7,738 555.8,749 558.6,759.9 562.7,746.2 566.8,757.2 569.5,768.6 573.6,765.4 576.4,753.1 579.1,749 581.8,762.6 584.6,768.6 632.5,768.6 636.6,762.6 640.7,754.4 643.4,762.6 647.5,768.6 681.7,768.6 685.8,761.3 688.6,768.6 691.3,768.6 733,768.6 734.6,764.9 736.2,768.6 771.7,768.6 774.9,755.2 776,759.5 778.1,738 779.7,748.8 781.3,759.5 783.5,753.1 785.1,757.4 787.3,750.9 789.9,761.7 791.6,768.6 812.5,768.6 814.7,764.9 817.3,766 820.6,759.5 822.2,760.6 824.1,753.1 825.9,763.8 828.6,766 829.7,768.6 844.7,768.6 846.9,764.9 848.5,768.6 849.6,768.6 851.2,762.7 853.3,764.9 855,768.6 916.4,768.6 919.3,748.1 920.7,731 923.6,745.2 926.4,756.6 930.7,768.6 935,756.6 937.8,742.4 940.7,736.7 943.5,731 946.4,722.4 949.2,745.2 953.5,748.1 956.4,739.5 959.2,745.2 962.1,756.6 966.3,750.9 969.2,768.6 972,756.6 974.9,743.8 979.2,768.6 983.4,762.3 987.7,756.6 992,750.9 994.9,729.6 997.7,756.6 1002,768.6 1004.8,736.7 1007.7,756.6 1012,768.6 1014.8,731 1017.7,756.6 1021.9,768.6 1024.8,705.3 1027.6,733.8 1030.5,768.6 1033.3,725.3 1036.2,742.4 1040.5,750.9 1044.7,732.4 1046.2,742.9 1047.6,736.7 1049,723.1 1050.4,708.2 1051.8,727.6 1053.3,736.7 1054.7,737.3 1056.1,722.4 1059,750.9 1061.9,703.9 1063.3,699.2 1064.7,733.8 1066.8,754.2 1069,739.5 1070.4,741.9 1071.8,719.6 1073.2,730.4 1074.7,708.2 1076.1,737 1077.5,739.5 1079.7,713.4 1081.8,696.8 1083.2,679.7 1084.7,696.6 1086.1,722.4 1087.5,692.2 1088.9,696.8 1090.3,697 1091.8,685.4 1093.2,686.1 1094.6,725.3 1096.8,709.1 1098.9,731 1100.3,708.2 1101.8,711 1103.9,693.3 1106,705.3 1108.2,694 1110.3,696.8 1111.8,682.8 1113.2,708.2 1114.6,691.9 1116,719.6 1117.5,687.2 1118.9,685.4 1120.3,646.5 1121.7,642.6 1123.2,667.9 1124.6,705.3 1126.8,688.7 1128.9,713.9 1130.3,736.1 1131.7,725.3 1133.2,714.6 1134.6,693.9 1136.7,704.1 1138.8,745.2 1140.2,710.1 1141.7,696.8 1143.1,685.8 1144.5,688.2 1146,709.3 1147.4,742.4 1148.8,700.2 1150.2,691.1 1151.7,693.6 1153.1,665.4 1154.5,707 1155.9,705.3 1157.3,691 1158.8,679.7 1160.2,698.9 1161.6,719.6 1163,678.6 1164.5,674 1165.9,689.2 1167.3,739.5 1168.8,694.1 1170.2,662.6 1171.6,680.7 1173,719.6 1174.5,745.5 1175.9,742.4 1177.3,699 1178.7,685.4 1180.8,658.7 1183,674 1184.5,716.6 1185.9,719.6 1187.3,703.7 1188.7,685.4 1190.4,672.7 1192.1,691.1 1193,736.7 1194.5,732.9 1195.9,725.3 1197.3,748.1 1198.7,723 1200.1,739.5 1202.2,727.9 1204.4,713.9 1205.8,744.9 1207.3,733.8 1208.7,756.9 1210.1,748.1 1211.5,749.6 1213,733.8 1214.4,729 1215.8,745.2 1217.2,729.4 1218.7,725.3 1221.5,759.5 1224.4,716.7 1227.2,750.9 1230.1,736.7 1232.9,756.6 1237.2,758.1 1241.5,753.8 1245.7,748.1 1250,738.1 1254.3,748.1 1257.1,759.5 1261.4,739.5 1264.3,750.9 1267.7,741 1271.4,753.8 1274.3,742.4 1278.5,753.8 1281.4,760.9 1285.7,745.2 1289.9,739.5 1292.8,748.1 1295.6,760.9 1299.9,759.5 1302.8,768.6 1315.6,768.6 1319.9,762.3 1324.1,768.6 1366.9,768.6 1372.6,763.8 1378.3,760.9 1382.6,739.5 1386.9,756.6 1389.7,768.6 1394,753.8 1396.9,748.1 1399.7,745.2 1402.6,748.1 1405.4,741 1408.3,756.6 1411.1,768.6 1526.6,768.6" fill="none" stroke="#008000" stroke-width="2" />
<rect x="541.5" y="739" width="5.5" height="29" fill="#0000FF"/>
<rect x="557" y="739" width="3" height="29" fill="#0000FF"/>
<rect x="595" y="739" width="3" height="29" fill="#0000FF"/>
<rect x="643" y="739" width="3" height="29" fill="#0000FF"/>
<rect x="663" y="739" width="3" height="29" fill="#0000FF"/>
<rect x="676" y="739" width="3" height="29" fill="#0000FF"/>
<rect x="684" y="739" width="3" height="29" fill="#0000FF"/>
<rect x="691" y="739" width="3" height="29" fill="#0000FF"/>
<rect x="697" y="739" width="3" height="29" fill="#0000FF"/>
<rect x="717" y="739" width="3" height="29" fill="#0000FF"/>
<rect x="730" y="739" width="3" height="29" fill="#0000FF"/>
<rect x="771" y="739" width="3" height="29" fill="#0000FF"/>
<rect x="803.4" y="739" width="3" height="29" fill="#0000FF"/>
<rect x="876.5" y="739" width="3" height="29" fill="#0000FF"/>
<rect x="928.4" y="739" width="3" height="29" fill="#0000FF"/>
<polyline points="188,252.6 194.1,251.6 207.3,254.6 210.4,258.3 218.5,257.7 220.6,258.7 234.8,259.1 235.9,260.7 245,261.7 257.2,261.3 265.4,259.1 267.4,260.7 275.6,261.7 281.7,261.1 300,261.1 304.1,260.1 308.2,261.3 312.2,266.8 318.3,268.9 324.4,268.9 328.5,267.2 334.6,268.5 340.7,268.9 343.8,272.5 350.9,271.9 354,270.9 357,273.6 365.2,274 367.2,275.4 374.3,276 377.4,278.7 383.5,279.5 387.6,284.8 391.6,287.8 399.8,285.2 403.9,288.2 409,292.3 416.1,293.3 417.1,294.7 426.3,295.3 428.3,296.8 440.5,296.4 452.7,297.4 461.9,302.1 467,300 475.1,300.4 479.2,302.5 489.4,302.9 491.4,304.5 501.6,308.6 511.8,308.6 513.8,306.6 515.9,309 522,309.6 523,309.8 527.5,315.5 530.9,314.4 535.4,317.7 543.4,318.9 546.8,321.1 551.3,320 556.9,315.9 564.8,311.6 569.4,313.2 575,311 579.5,315 587.5,314.4 592,315 598.8,310.3 615.7,310.3 618,311.6 629.3,312.1 631.6,313.7 637.2,313.2 639.5,312.1 646.3,311 650.8,307.6 654.2,303 662.1,301.5 668.9,295.1 677.9,294.7 681.3,292.9 690.4,291.7 696,289.9 717.5,289.5 719.8,286.1 723.2,289.5 731.1,290.6 742.4,290.6 746.9,287.2 750.3,289.5 754.9,288.3 765,284.9 770.7,287.7 778.6,287.7 782,286.1 794.4,284.5 797.8,283.1 805.7,283.1 808.5,285.4 813.7,283.1 819.3,286.1 822.7,287.7 825,286.1 838.5,284.3 840.8,282.7 844.2,284.9 848.7,283.4 851,284.9 854.4,281.6 857.3,280 858,281 861.4,278.7 896.5,278.7 905.5,281 907.8,279.4 919.1,278.2 925.9,276 934.9,275.3 940.6,277.6 946.2,275.3 955.3,275.3 958.7,273.7 971.1,272.6 984.7,273.7 998.2,272.6 1011.8,272.6 1016.3,270.1 1025.4,270.1 1031,267.4 1041.2,266.3 1045.7,264 1050.3,265.8 1057.1,261.7 1060.4,263.3 1062.7,261.7 1066.1,263.5 1093.2,263.5 1096.6,265.8 1100,264 1115.9,264 1118.1,265.8 1152.1,265.8 1154.3,264.4 1158.8,265.8 1188.2,265.8 1191.6,264 1193,264.7 1193,265.8 1214.5,265.6 1216.8,266.3 1220.1,263.5 1239.4,263.3 1241.6,261.7 1247.3,261.7 1249.5,263.5 1255.2,263.5 1258.6,261.7 1264.3,261.7 1268.8,259 1273.3,261.1 1281.2,254.9 1292.5,253.8 1295.9,252 1301.6,251.6 1306.1,249.3 1312.9,248.6 1316.3,247 1327.6,246.4 1331,244.8 1337.8,244.1 1341.2,242.5 1344.6,244.8 1346.8,243.2 1350.2,245.2 1354.7,244.8 1357,243.2 1374,241.8 1380.7,237.5 1389.8,236.9 1397.7,235.7 1401.1,234.6 1405.6,234.6 1411.3,231.6 1416.9,233 1422.6,230.5 1433.9,229.6 1436.2,228.5 1438.4,229.6 1441.8,227.8 1446.3,228.3 1450.9,230.7 1455.4,230.5 1463.3,229.4 1467.8,230.7 1488.2,230.5 1492.7,231.2 1495,232.8 1508.5,232.8 1510.8,234.6 1518.7,234.6 1522.1,233.9 1526.6,235" fill="none" stroke="#000000" stroke-width="2" />
<polyline points="188,343.2 193.1,342.8 202.3,338.1 208.4,333 218.5,335.1 231.8,335.7 234.8,333 242,330 251.1,329 267.4,329 270.5,331 277.6,329 293.9,329 300,333 306.1,335.1 314.3,331 324.4,329.4 363.1,329 364.2,326.9 380.4,327.3 384.5,332.4 388.6,331 391.6,333 399.8,335.5 421.2,336.1 427.3,341.2 432.4,349.3 438.5,362.6 443.6,373.8 450.7,382.9 467,386 470.1,390 472.1,391.6 477.2,395.1 483.3,398.1 489.4,399.8 495.5,399.6 502.6,396.1 506.7,395.1 510.8,397.7 513.8,401.2 517.9,404.7 521,405.9 523,404.3 523,402.6 525.3,392.4 528.7,381.1 530.9,367.5 534.3,353.9 537.7,342.6 542.2,331.3 542.9,320 542.9,330 543.8,317.7 546.8,304.2 550.1,290.6 553.5,279.3 556.9,264.6 561.5,252.1 566,242 571.6,232.9 578.4,223.9 584.1,214.8 589.7,208 595.4,203.5 597.6,199 606.7,194.5 611.2,189.9 619.1,186.1 623.7,182.5 630.4,178.6 638.4,177.5 653.1,177.5 658.7,181.6 663.2,184.7 679.1,184.7 682.5,182 694.9,178.2 706.2,171.8 713,171.2 723.2,170.7 725.4,168 734.5,164.4 743.5,163.9 746.9,160.5 753.7,157.8 765,156 796.7,156 803.5,159.4 819.3,162.3 837.4,162.8 839.7,165.7 844.2,163.9 849.9,168 857.3,168 858,167.9 862.5,169.7 878.4,169.7 882.9,166.7 891.9,164 898.7,159.9 911.2,156.5 914.5,153.2 925.9,149.8 944,148.2 946.2,145.9 948.5,146.8 955.3,143 959.8,142.3 964.3,145.9 971.1,143.4 980.1,141.4 984.7,141.8 988.1,145.2 993.7,144.1 997.1,146.4 1002.8,148 1011.8,148 1016.3,150.4 1020.9,153.6 1026.5,155 1031,157.7 1036.7,158.8 1041.2,158.4 1045.7,160.6 1054.8,162.2 1063.8,163.3 1070.6,169.7 1076.3,170.1 1084.2,178.7 1091,177.6 1093.2,184.1 1098.9,190.5 1102.3,191.6 1106.8,196.1 1109.1,195 1114.7,201.3 1121.5,204.1 1124.9,203.6 1131.7,210.8 1138.5,218.8 1140.7,222.1 1145.3,221.7 1152.1,227.8 1156.6,227.8 1163.4,236.4 1167.9,234.6 1173.5,239.1 1179.2,240.2 1184.9,244.8 1193,243.2 1193,243.6 1196.4,245.9 1202,243 1215.6,242.5 1217.9,244.8 1222.4,242.1 1269.9,241.8 1274.4,238 1280.1,230.1 1285.7,222.1 1292.5,216.5 1297.1,210.8 1303.8,206.3 1310.6,198.4 1316.3,193.9 1321.9,188.2 1328.7,185.5 1335.5,180.3 1343.4,174.6 1353.6,171.9 1360.4,166.7 1369.4,163.8 1377.4,158.8 1387.5,155.4 1392.1,153.2 1395.4,154.3 1404.5,149.8 1416.9,148.6 1431.6,148.6 1433.9,146.4 1440.7,146.4 1444.1,143.7 1453.1,141.8 1501.8,141.8 1504,138.9 1508.5,139.6 1511.9,136.6 1515.3,138.9 1519.9,136.2 1526.6,135.1" fill="none" stroke="#808080" stroke-width="2" />
<polyline points="188,542.7 192.1,540.1 194.1,541.7 200.2,542.7 415.1,542.7 417.1,547.8 420.2,546.8 421.2,550.9 423.2,546.8 429.3,545.2 432.4,549.3 435.4,546.4 440.5,544.8 445,544.8 447.7,549.3 452.7,546.4 455.8,550.9 458.9,553.5 461.9,550.9 462.9,553.9 463.9,549.9 470.1,546.8 479.2,544.2 483.7,544.2 486.3,548.8 491.4,546.4 493.5,549.9 496.5,546.8 499.6,550.9 501.6,549.9 506.7,556 509.8,552.9 511.8,555.4 513.8,551.9 515.9,553.9 517.9,549.9 522,547.8 523,550.5 527.1,547 531.2,549.2 535.3,547 539.4,550.5 542.2,547.8 546.3,554.6 550.4,550.5 554.5,553.3 557.2,549.7 561.3,554.6 564.1,553.3 566.8,556 569.5,553.3 573.6,557.4 579.1,559.6 594.2,560.7 858,560.7 858,561.3 1046.2,561.3 1049,555.6 1053.3,557.1 1057.6,551.4 1061.9,548.5 1066.1,554.2 1070.4,551.9 1074.7,548.5 1079,547.1 1083.2,552.8 1086.1,555.6 1090.4,557.1 1093.2,553.6 1097.5,556.5 1103.2,549.9 1107.5,547.1 1111.7,548.5 1114.6,551.4 1120.3,547.1 1126,545.1 1137.4,544.2 1143.1,542.8 1193,542.8 1193,542.8 1372,542.8 1374,548.5 1376.9,550.8 1379.7,547.1 1384,546.2 1389.7,544.2 1394,543.7 1396.9,548.5 1399.7,547.1 1402.6,552.8 1405.4,555.6 1408.3,553.6 1412.5,557.1 1416.8,555.6 1419.7,553.6 1422.5,557.1 1426.8,558.5 1431.1,559.3 1433.1,555.6 1435.3,557.9 1442.5,559.9 1455.3,560.8 1526.6,560.8" fill="none" stroke="#808000" stroke-width="2" />
<polyline points="188,660.2 193.3,667.3 195.9,676.5 201.1,683.9 207.7,686.5 214.3,683.1 219.5,678.6 224.8,678.6 230,683.9 243.1,683.9 245.8,687 249.7,690.2 253.6,686.5 257.6,690.2 262.8,689.6 266.8,686.5 272,683.1 277.3,687 281.2,683.9 289.1,683.1 291.7,680.5 297,673.4 304.8,672.6 307.5,670 321.9,670 324.5,665.5 327.1,667.3 331.1,663.9 335,663.9 337.6,667.3 340.3,663.9 352.1,663.4 356,660.8 369.2,660.2 371.8,658.1 377,657.6 379.7,655.5 391.5,655 398,647.1 402,647.1 404.6,650.3 411.2,649 415.1,645 417.7,647.1 425.6,634.5 429.5,630.6 434.8,622.7 440,613.5 444,608.8 449.2,606.9 451.9,604.3 467.6,603.8 470.2,600.9 476.8,600.4 478.1,598.3 484.7,598.3 487.3,600.9 489.9,599.1 492.5,600.9 516.2,600.9 517.5,599.1 520.1,600.9 522.5,603 523,603.9 525.7,609.4 529.8,625.8 533.9,642.2 539.4,661.4 544.9,675.1 550.4,684.6 555.8,690.1 564.1,694.2 570.9,697 579.1,701.1 587.3,703.8 602.4,704.3 605.1,702.4 609.2,703.8 612,701.9 614.7,704.3 618.8,701.9 627,701.1 631.1,698.3 639.3,697 643.4,692.8 648.9,691.5 655.7,687.4 669.4,686.8 672.2,689.6 676.3,688.2 694.1,689.6 696.8,692 699.5,689.6 711.8,688.2 715.4,685.5 718.7,689.6 722.8,686.8 735.1,683.3 740.6,683.8 743.3,686 747.4,680 769.3,679.2 770.7,676.4 776.2,675.6 778.9,672.9 784.4,672.9 787.1,675.1 792.6,675.1 795.3,678.6 800.8,677.8 806.3,673.7 814.5,672.9 818.6,670.1 833.6,669.6 837.7,664.1 841,669 844.6,664.9 848.7,669.6 855.5,669.6 858,665.5 858,666.8 862.3,668.3 865.1,665.4 868,668.8 870.8,666.8 875.1,669.7 879.4,667.7 886.5,665.4 889.4,662.6 892.2,665.4 896.5,662 909.3,661.1 913.6,658.3 917.9,660.3 925,656.9 935,656.3 943.5,655.4 947.8,650.6 950.7,652.6 956.4,644.6 960.6,649.7 966.3,655.4 972,651.1 977.7,646.9 983.4,643.2 989.1,641.2 994.9,636.3 999.1,636.9 1006.3,634 1010.5,635.5 1014.8,631.2 1020.5,629.8 1026.2,627.8 1031.9,624.9 1037.6,621.2 1043.3,619.8 1051.9,615.5 1057.6,608.4 1061.9,604.1 1067.6,605.5 1071.8,601.3 1076.1,594.1 1080.4,589.9 1084.7,594.1 1087.5,581.3 1091.8,575.6 1094.6,565.6 1100.3,572.7 1104.6,567 1108.9,558.5 1113.2,564.2 1117.4,559.9 1121.7,556.5 1126,552.8 1131.7,547.1 1137.4,542.2 1143.1,540 1146,532.8 1148.8,534.8 1154.5,533.7 1157.4,530 1160.2,534.3 1164.5,539.4 1168.8,537.1 1174.5,530 1180.2,529.1 1184.4,532.8 1188.7,537.1 1193,538.5 1193,538.5 1195.9,537.1 1198.7,540 1201.6,535.7 1204.4,539.4 1207.3,535.7 1211.5,539.4 1215.8,539.4 1218.7,542.2 1224.4,541.4 1230.1,545.7 1235.8,544.2 1238.6,546.2 1245.7,546.2 1250,550.8 1254.3,551.4 1257.1,554.8 1265.7,554.8 1271.4,561.3 1275.7,565.6 1281.4,574.2 1285.7,579.9 1291.4,588.4 1295.6,594.7 1302.8,604.1 1307,612.7 1311.3,616.9 1315.6,625.5 1319.9,629.8 1322.7,635.5 1328.4,639.7 1332.7,644 1335.6,649.7 1339.8,651.7 1344.1,656.3 1349.8,664 1354.1,665.4 1356.9,669.7 1361.2,671.1 1364.1,674 1368.3,676.2 1374,682.5 1379.7,686.8 1384,685.4 1389.2,678.8 1392.6,681.1 1396.9,685.4 1401.1,684.8 1405.4,686.8 1409.7,689.6 1414,690.2 1418.2,695.3 1423.9,693.9 1428.2,699 1432.5,703.9 1438.2,708.2 1442.5,708.7 1445.3,712.4 1452.4,713.3 1456.7,715.3 1459.6,713.9 1463.9,717.3 1469.6,723.9 1475.3,721.9 1481,730.4 1493.8,731 1498.1,735.8 1503.8,736.7 1508,741 1513.7,742.4 1516.6,745.2 1519.4,744.7 1522.3,747.5 1526.6,747.5" fill="none" stroke="#FF0000" stroke-width="2" />
<polyline points="283.8,768.6 287.8,757.9 291.7,747.4 295.6,735.6 300.9,727.7 307.5,721.9 321.9,719.8 325.8,712 332.4,707.2 339,705.4 349.5,704.9 353.4,710.1 358.1,715.9 363.9,710.7 371.8,706.7 384.9,704.9 391.5,704.1 393.3,700.1 395.4,702.8 403.3,704.1 412.5,704.1 416.4,698.8 423,691.7 429.5,681.8 434.8,668.6 440,655.5 446.6,647.6 453.2,643.7 461,641.9 470.2,641.1 475.5,635.8 478.1,637.7 482,634.5 486,637.1 492.5,639.8 493.9,637.7 497.8,639.2 509.6,640.6 513.5,634.5 520.1,629.3 522.5,630.6 523,625.8 525.7,639.5 529.8,672.3 533.9,694.2 538.1,710.6 543.5,725.7 550.4,733.9 557.2,740.7 562.7,746.2 568.2,742.1 572.3,740.7 576.4,742.9 580.5,739.4 585.9,743.5 591.4,740.2 596.9,738 605.1,736.6 618.8,735.8 628.4,734.7 631.1,731.2 633.8,732.5 639.3,724.9 646.2,720.8 654.4,718.8 683.1,718.3 687.2,713.4 692.7,708.4 709.1,704.3 711.8,699.7 716,694.2 718.7,697 721.4,692.8 726.9,691.5 731,683.3 735.1,679.2 737.8,680 740.6,682.7 743.3,683.8 747.4,679.2 752.9,676.4 765.2,672.9 770.7,664.7 776.2,659.2 783,657.3 794,655.9 797.5,662.7 802.2,658.6 810.4,656.4 818.6,655.4 824.1,649.1 832.3,643 839.1,642.2 844.6,649.1 850.1,651.8 854.2,647.7 858,646.9 858,644 863.7,648.3 869.4,652.6 875.1,653.4 880.8,648.3 886.5,644 892.2,642.6 895.1,636.9 900.8,634 906.5,628.3 912.2,622.6 917.9,616.9 920.7,619.8 926.4,614.1 932.1,619.2 937.8,614.1 943.5,611.2 950.7,605.5 956.4,596.4 959.2,598.4 962.1,605.5 967.8,609.8 974.9,608.4 980.6,605.5 984.9,599.8 989.1,592.7 993.4,587 997.7,581.3 1000.6,587 1006.3,579.9 1012,565.6 1016.2,554.2 1021.9,548.5 1026.2,555.6 1030.5,562.8 1034.8,567 1039,578.4 1044.7,584.1 1049.6,587.9 1053.3,581.3 1056.1,562.8 1059,548.5 1061.9,537.1 1066.1,528.6 1070.4,525.7 1073.3,520 1075.6,514.7 1079.2,500.4 1082.7,495.7 1086.3,483.8 1087.6,462 1088.7,438.7 1091,396 1092.7,367.5 1095,366.3 1097,380.5 1098.9,377 1101.2,350.9 1104,330.7 1107.7,329.5 1109.3,337.8 1113.6,329.5 1116.4,322.4 1119.5,298 1124.3,281.4 1129,267.2 1131.4,255.3 1135,250.6 1139.7,248.2 1143.3,250.6 1149.2,245.8 1152.8,249.4 1156.3,271.9 1158.7,305.2 1159.9,320 1161,343.7 1162.3,372.2 1164.6,400.7 1167,426.8 1169.4,453 1171.8,474.3 1175.3,500.4 1178.9,514.7 1182.4,524.2 1184.8,530 1190,535 1193,539.4 1201.6,540.5 1207.3,537.7 1213,541.4 1215.8,547.1 1221.5,552.8 1228.6,559.3 1234.3,567 1240,572.7 1242.9,579.9 1248.6,588.4 1254.3,597 1261.4,604.1 1264.3,609.2 1266.3,607 1271.4,616.9 1275.7,626.9 1278.5,634 1281.4,648.3 1284.2,659.7 1287.1,668.3 1292.8,671.1 1295.6,682.5 1299.9,699.6 1302.8,711 1307,723.9 1311.3,736.7 1315.6,750.9 1319.9,759.5 1324.1,763.8 1331.3,768.6" fill="none" stroke="#804040" stroke-width="2" />
</g>
<line x1="189" y1="767.5" x2="1527" y2="767.5" stroke="#0000FF" stroke-width="1" stroke-dasharray="1,1"/>
<line x1="190" y1="767.5" x2="1527" y2="767.5" stroke="#E0E000" stroke-width="1" stroke-dasharray="1,3"/>
<rect x="187" y="47" width="2" height="722" fill="#808080"/>
<rect x="187" y="47" width="1342" height="2" fill="#808080"/>
<rect x="1527" y="47" width="2" height="722" fill="#808080"/>
<rect x="187" y="767" width="1342" height="1" fill="none"/>
<line x1="41.5" y1="48" x2="41.5" y2="768" stroke="#808080" stroke-width="1"/>
<line x1="36" y1="48.5" x2="44" y2="48.5" stroke="#808080" stroke-width="1"/>
<text transform="translate(34,53) scale(0.85,1)" fill="#FF0000" font-size="12.5" text-anchor="end" >25.0</text>
<line x1="36" y1="77.5" x2="42" y2="77.5" stroke="#808080" stroke-width="1"/>
<text transform="translate(34,82) scale(0.85,1)" fill="#FF0000" font-size="12.5" text-anchor="end" >24.0</text>
<line x1="36" y1="106.5" x2="42" y2="106.5" stroke="#808080" stroke-width="1"/>
<text transform="translate(34,111) scale(0.85,1)" fill="#FF0000" font-size="12.5" text-anchor="end" >23.0</text>
<line x1="36" y1="134.5" x2="42" y2="134.5" stroke="#808080" stroke-width="1"/>
<text transform="translate(34,139) scale(0.85,1)" fill="#FF0000" font-size="12.5" text-anchor="end" >22.0</text>
<line x1="36" y1="163.5" x2="42" y2="163.5" stroke="#808080" stroke-width="1"/>
<text transform="translate(34,168) scale(0.85,1)" fill="#FF0000" font-size="12.5" text-anchor="end" >21.0</text>
<line x1="36" y1="192.5" x2="42" y2="192.5" stroke="#808080" stroke-width="1"/>
<text transform="translate(34,197) scale(0.85,1)" fill="#FF0000" font-size="12.5" text-anchor="end" >20.0</text>
<line x1="36" y1="221.5" x2="42" y2="221.5" stroke="#808080" stroke-width="1"/>
<text transform="translate(34,226) scale(0.85,1)" fill="#FF0000" font-size="12.5" text-anchor="end" >19.0</text>
<line x1="36" y1="250.5" x2="42" y2="250.5" stroke="#808080" stroke-width="1"/>
<text transform="translate(34,255) scale(0.85,1)" fill="#FF0000" font-size="12.5" text-anchor="end" >18.0</text>
<line x1="36" y1="278.5" x2="42" y2="278.5" stroke="#808080" stroke-width="1"/>
<text transform="translate(34,283) scale(0.85,1)" fill="#FF0000" font-size="12.5" text-anchor="end" >17.0</text>
<line x1="36" y1="307.5" x2="42" y2="307.5" stroke="#808080" stroke-width="1"/>
<text transform="translate(34,312) scale(0.85,1)" fill="#FF0000" font-size="12.5" text-anchor="end" >16.0</text>
<line x1="36" y1="336.5" x2="42" y2="336.5" stroke="#808080" stroke-width="1"/>
<text transform="translate(34,341) scale(0.85,1)" fill="#FF0000" font-size="12.5" text-anchor="end" >15.0</text>
<line x1="36" y1="365.5" x2="42" y2="365.5" stroke="#808080" stroke-width="1"/>
<text transform="translate(34,370) scale(0.85,1)" fill="#FF0000" font-size="12.5" text-anchor="end" >14.0</text>
<line x1="36" y1="394.5" x2="42" y2="394.5" stroke="#808080" stroke-width="1"/>
<text transform="translate(34,399) scale(0.85,1)" fill="#FF0000" font-size="12.5" text-anchor="end" >13.0</text>
<line x1="36" y1="422.5" x2="42" y2="422.5" stroke="#808080" stroke-width="1"/>
<text transform="translate(34,427) scale(0.85,1)" fill="#FF0000" font-size="12.5" text-anchor="end" >12.0</text>
<line x1="36" y1="451.5" x2="42" y2="451.5" stroke="#808080" stroke-width="1"/>
<text transform="translate(34,456) scale(0.85,1)" fill="#FF0000" font-size="12.5" text-anchor="end" >11.0</text>
<line x1="36" y1="480.5" x2="42" y2="480.5" stroke="#808080" stroke-width="1"/>
<text transform="translate(34,485) scale(0.85,1)" fill="#FF0000" font-size="12.5" text-anchor="end" >10.0</text>
<line x1="36" y1="509.5" x2="42" y2="509.5" stroke="#808080" stroke-width="1"/>
<text transform="translate(34,514) scale(0.85,1)" fill="#FF0000" font-size="12.5" text-anchor="end" >9.0</text>
<line x1="36" y1="538.5" x2="42" y2="538.5" stroke="#808080" stroke-width="1"/>
<text transform="translate(34,543) scale(0.85,1)" fill="#FF0000" font-size="12.5" text-anchor="end" >8.0</text>
<line x1="36" y1="566.5" x2="42" y2="566.5" stroke="#808080" stroke-width="1"/>
<text transform="translate(34,571) scale(0.85,1)" fill="#FF0000" font-size="12.5" text-anchor="end" >7.0</text>
<line x1="36" y1="595.5" x2="42" y2="595.5" stroke="#808080" stroke-width="1"/>
<text transform="translate(34,600) scale(0.85,1)" fill="#FF0000" font-size="12.5" text-anchor="end" >6.0</text>
<line x1="36" y1="624.5" x2="42" y2="624.5" stroke="#808080" stroke-width="1"/>
<text transform="translate(34,629) scale(0.85,1)" fill="#FF0000" font-size="12.5" text-anchor="end" >5.0</text>
<line x1="36" y1="653.5" x2="42" y2="653.5" stroke="#808080" stroke-width="1"/>
<text transform="translate(34,658) scale(0.85,1)" fill="#FF0000" font-size="12.5" text-anchor="end" >4.0</text>
<line x1="36" y1="682.5" x2="42" y2="682.5" stroke="#808080" stroke-width="1"/>
<text transform="translate(34,687) scale(0.85,1)" fill="#FF0000" font-size="12.5" text-anchor="end" >3.0</text>
<line x1="36" y1="710.5" x2="42" y2="710.5" stroke="#808080" stroke-width="1"/>
<text transform="translate(34,715) scale(0.85,1)" fill="#FF0000" font-size="12.5" text-anchor="end" >2.0</text>
<line x1="36" y1="739.5" x2="42" y2="739.5" stroke="#808080" stroke-width="1"/>
<text transform="translate(34,744) scale(0.85,1)" fill="#FF0000" font-size="12.5" text-anchor="end" >1.0</text>
<line x1="36" y1="768.5" x2="44" y2="768.5" stroke="#808080" stroke-width="1"/>
<text transform="translate(34,773) scale(0.85,1)" fill="#FF0000" font-size="12.5" text-anchor="end" >0.0</text>
<line x1="77.5" y1="48" x2="77.5" y2="768" stroke="#808080" stroke-width="1"/>
<line x1="72" y1="48.5" x2="80" y2="48.5" stroke="#808080" stroke-width="1"/>
<text transform="translate(72,53) scale(0.85,1)" fill="#000000" font-size="12.5" text-anchor="end" >1032</text>
<line x1="72" y1="82.5" x2="78" y2="82.5" stroke="#808080" stroke-width="1"/>
<text transform="translate(72,87) scale(0.85,1)" fill="#000000" font-size="12.5" text-anchor="end" >1030</text>
<line x1="72" y1="117.5" x2="78" y2="117.5" stroke="#808080" stroke-width="1"/>
<text transform="translate(72,122) scale(0.85,1)" fill="#000000" font-size="12.5" text-anchor="end" >1028</text>
<line x1="72" y1="151.5" x2="78" y2="151.5" stroke="#808080" stroke-width="1"/>
<text transform="translate(72,156) scale(0.85,1)" fill="#000000" font-size="12.5" text-anchor="end" >1026</text>
<line x1="72" y1="185.5" x2="78" y2="185.5" stroke="#808080" stroke-width="1"/>
<text transform="translate(72,190) scale(0.85,1)" fill="#000000" font-size="12.5" text-anchor="end" >1024</text>
<line x1="72" y1="219.5" x2="78" y2="219.5" stroke="#808080" stroke-width="1"/>
<text transform="translate(72,224) scale(0.85,1)" fill="#000000" font-size="12.5" text-anchor="end" >1022</text>
<line x1="72" y1="254.5" x2="78" y2="254.5" stroke="#808080" stroke-width="1"/>
<text transform="translate(72,259) scale(0.85,1)" fill="#000000" font-size="12.5" text-anchor="end" >1020</text>
<line x1="72" y1="288.5" x2="78" y2="288.5" stroke="#808080" stroke-width="1"/>
<text transform="translate(72,293) scale(0.85,1)" fill="#000000" font-size="12.5" text-anchor="end" >1018</text>
<line x1="72" y1="322.5" x2="78" y2="322.5" stroke="#808080" stroke-width="1"/>
<text transform="translate(72,327) scale(0.85,1)" fill="#000000" font-size="12.5" text-anchor="end" >1016</text>
<line x1="72" y1="357.5" x2="78" y2="357.5" stroke="#808080" stroke-width="1"/>
<text transform="translate(72,362) scale(0.85,1)" fill="#000000" font-size="12.5" text-anchor="end" >1014</text>
<line x1="72" y1="391.5" x2="78" y2="391.5" stroke="#808080" stroke-width="1"/>
<text transform="translate(72,396) scale(0.85,1)" fill="#000000" font-size="12.5" text-anchor="end" >1012</text>
<line x1="72" y1="425.5" x2="78" y2="425.5" stroke="#808080" stroke-width="1"/>
<text transform="translate(72,430) scale(0.85,1)" fill="#000000" font-size="12.5" text-anchor="end" >1010</text>
<line x1="72" y1="459.5" x2="78" y2="459.5" stroke="#808080" stroke-width="1"/>
<text transform="translate(72,464) scale(0.85,1)" fill="#000000" font-size="12.5" text-anchor="end" >1008</text>
<line x1="72" y1="494.5" x2="78" y2="494.5" stroke="#808080" stroke-width="1"/>
<text transform="translate(72,499) scale(0.85,1)" fill="#000000" font-size="12.5" text-anchor="end" >1006</text>
<line x1="72" y1="528.5" x2="78" y2="528.5" stroke="#808080" stroke-width="1"/>
<text transform="translate(72,533) scale(0.85,1)" fill="#000000" font-size="12.5" text-anchor="end" >1004</text>
<line x1="72" y1="562.5" x2="78" y2="562.5" stroke="#808080" stroke-width="1"/>
<text transform="translate(72,567) scale(0.85,1)" fill="#000000" font-size="12.5" text-anchor="end" >1002</text>
<line x1="72" y1="597.5" x2="78" y2="597.5" stroke="#808080" stroke-width="1"/>
<text transform="translate(72,602) scale(0.85,1)" fill="#000000" font-size="12.5" text-anchor="end" >1000</text>
<line x1="72" y1="631.5" x2="78" y2="631.5" stroke="#808080" stroke-width="1"/>
<text transform="translate(72,636) scale(0.85,1)" fill="#000000" font-size="12.5" text-anchor="end" >998</text>
<line x1="72" y1="665.5" x2="78" y2="665.5" stroke="#808080" stroke-width="1"/>
<text transform="translate(72,670) scale(0.85,1)" fill="#000000" font-size="12.5" text-anchor="end" >996</text>
<line x1="72" y1="699.5" x2="78" y2="699.5" stroke="#808080" stroke-width="1"/>
<text transform="translate(72,704) scale(0.85,1)" fill="#000000" font-size="12.5" text-anchor="end" >994</text>
<line x1="72" y1="734.5" x2="78" y2="734.5" stroke="#808080" stroke-width="1"/>
<text transform="translate(72,739) scale(0.85,1)" fill="#000000" font-size="12.5" text-anchor="end" >992</text>
<line x1="72" y1="768.5" x2="80" y2="768.5" stroke="#808080" stroke-width="1"/>
<text transform="translate(72,773) scale(0.85,1)" fill="#000000" font-size="12.5" text-anchor="end" >990</text>
<line x1="115.5" y1="48" x2="115.5" y2="768" stroke="#808080" stroke-width="1"/>
<line x1="110" y1="48.5" x2="118" y2="48.5" stroke="#808080" stroke-width="1"/>
<text transform="translate(108,53) scale(0.85,1)" fill="#008000" font-size="12.5" text-anchor="end" >60.0</text>
<line x1="110" y1="72.5" x2="116" y2="72.5" stroke="#808080" stroke-width="1"/>
<text transform="translate(108,77) scale(0.85,1)" fill="#008000" font-size="12.5" text-anchor="end" >58.0</text>
<line x1="110" y1="96.5" x2="116" y2="96.5" stroke="#808080" stroke-width="1"/>
<text transform="translate(108,101) scale(0.85,1)" fill="#008000" font-size="12.5" text-anchor="end" >56.0</text>
<line x1="110" y1="120.5" x2="116" y2="120.5" stroke="#808080" stroke-width="1"/>
<text transform="translate(108,125) scale(0.85,1)" fill="#008000" font-size="12.5" text-anchor="end" >54.0</text>
<line x1="110" y1="144.5" x2="116" y2="144.5" stroke="#808080" stroke-width="1"/>
<text transform="translate(108,149) scale(0.85,1)" fill="#008000" font-size="12.5" text-anchor="end" >52.0</text>
<line x1="110" y1="168.5" x2="116" y2="168.5" stroke="#808080" stroke-width="1"/>
<text transform="translate(108,173) scale(0.85,1)" fill="#008000" font-size="12.5" text-anchor="end" >50.0</text>
<line x1="110" y1="192.5" x2="116" y2="192.5" stroke="#808080" stroke-width="1"/>
<text transform="translate(108,197) scale(0.85,1)" fill="#008000" font-size="12.5" text-anchor="end" >48.0</text>
<line x1="110" y1="216.5" x2="116" y2="216.5" stroke="#808080" stroke-width="1"/>
<text transform="translate(108,221) scale(0.85,1)" fill="#008000" font-size="12.5" text-anchor="end" >46.0</text>
<line x1="110" y1="240.5" x2="116" y2="240.5" stroke="#808080" stroke-width="1"/>
<text transform="translate(108,245) scale(0.85,1)" fill="#008000" font-size="12.5" text-anchor="end" >44.0</text>
<line x1="110" y1="264.5" x2="116" y2="264.5" stroke="#808080" stroke-width="1"/>
<text transform="translate(108,269) scale(0.85,1)" fill="#008000" font-size="12.5" text-anchor="end" >42.0</text>
<line x1="110" y1="288.5" x2="116" y2="288.5" stroke="#808080" stroke-width="1"/>
<text transform="translate(108,293) scale(0.85,1)" fill="#008000" font-size="12.5" text-anchor="end" >40.0</text>
<line x1="110" y1="312.5" x2="116" y2="312.5" stroke="#808080" stroke-width="1"/>
<text transform="translate(108,317) scale(0.85,1)" fill="#008000" font-size="12.5" text-anchor="end" >38.0</text>
<line x1="110" y1="336.5" x2="116" y2="336.5" stroke="#808080" stroke-width="1"/>
<text transform="translate(108,341) scale(0.85,1)" fill="#008000" font-size="12.5" text-anchor="end" >36.0</text>
<line x1="110" y1="360.5" x2="116" y2="360.5" stroke="#808080" stroke-width="1"/>
<text transform="translate(108,365) scale(0.85,1)" fill="#008000" font-size="12.5" text-anchor="end" >34.0</text>
<line x1="110" y1="384.5" x2="116" y2="384.5" stroke="#808080" stroke-width="1"/>
<text transform="translate(108,389) scale(0.85,1)" fill="#008000" font-size="12.5" text-anchor="end" >32.0</text>
<line x1="110" y1="408.5" x2="116" y2="408.5" stroke="#808080" stroke-width="1"/>
<text transform="translate(108,413) scale(0.85,1)" fill="#008000" font-size="12.5" text-anchor="end" >30.0</text>
<line x1="110" y1="432.5" x2="116" y2="432.5" stroke="#808080" stroke-width="1"/>
<text transform="translate(108,437) scale(0.85,1)" fill="#008000" font-size="12.5" text-anchor="end" >28.0</text>
<line x1="110" y1="456.5" x2="116" y2="456.5" stroke="#808080" stroke-width="1"/>
<text transform="translate(108,461) scale(0.85,1)" fill="#008000" font-size="12.5" text-anchor="end" >26.0</text>
<line x1="110" y1="480.5" x2="116" y2="480.5" stroke="#808080" stroke-width="1"/>
<text transform="translate(108,485) scale(0.85,1)" fill="#008000" font-size="12.5" text-anchor="end" >24.0</text>
<line x1="110" y1="504.5" x2="116" y2="504.5" stroke="#808080" stroke-width="1"/>
<text transform="translate(108,509) scale(0.85,1)" fill="#008000" font-size="12.5" text-anchor="end" >22.0</text>
<line x1="110" y1="528.5" x2="116" y2="528.5" stroke="#808080" stroke-width="1"/>
<text transform="translate(108,533) scale(0.85,1)" fill="#008000" font-size="12.5" text-anchor="end" >20.0</text>
<line x1="110" y1="552.5" x2="116" y2="552.5" stroke="#808080" stroke-width="1"/>
<text transform="translate(108,557) scale(0.85,1)" fill="#008000" font-size="12.5" text-anchor="end" >18.0</text>
<line x1="110" y1="576.5" x2="116" y2="576.5" stroke="#808080" stroke-width="1"/>
<text transform="translate(108,581) scale(0.85,1)" fill="#008000" font-size="12.5" text-anchor="end" >16.0</text>
<line x1="110" y1="600.5" x2="116" y2="600.5" stroke="#808080" stroke-width="1"/>
<text transform="translate(108,605) scale(0.85,1)" fill="#008000" font-size="12.5" text-anchor="end" >14.0</text>
<line x1="110" y1="624.5" x2="116" y2="624.5" stroke="#808080" stroke-width="1"/>
<text transform="translate(108,629) scale(0.85,1)" fill="#008000" font-size="12.5" text-anchor="end" >12.0</text>
<line x1="110" y1="648.5" x2="116" y2="648.5" stroke="#808080" stroke-width="1"/>
<text transform="translate(108,653) scale(0.85,1)" fill="#008000" font-size="12.5" text-anchor="end" >10.0</text>
<line x1="110" y1="672.5" x2="116" y2="672.5" stroke="#808080" stroke-width="1"/>
<text transform="translate(108,677) scale(0.85,1)" fill="#008000" font-size="12.5" text-anchor="end" >8.0</text>
<line x1="110" y1="696.5" x2="116" y2="696.5" stroke="#808080" stroke-width="1"/>
<text transform="translate(108,701) scale(0.85,1)" fill="#008000" font-size="12.5" text-anchor="end" >6.0</text>
<line x1="110" y1="720.5" x2="116" y2="720.5" stroke="#808080" stroke-width="1"/>
<text transform="translate(108,725) scale(0.85,1)" fill="#008000" font-size="12.5" text-anchor="end" >4.0</text>
<line x1="110" y1="744.5" x2="116" y2="744.5" stroke="#808080" stroke-width="1"/>
<text transform="translate(108,749) scale(0.85,1)" fill="#008000" font-size="12.5" text-anchor="end" >2.0</text>
<line x1="110" y1="768.5" x2="118" y2="768.5" stroke="#808080" stroke-width="1"/>
<text transform="translate(108,773) scale(0.85,1)" fill="#008000" font-size="12.5" text-anchor="end" >0.0</text>
<line x1="151.5" y1="48" x2="151.5" y2="768" stroke="#808080" stroke-width="1"/>
<line x1="146" y1="48.5" x2="154" y2="48.5" stroke="#808080" stroke-width="1"/>
<text transform="translate(145,53) scale(0.85,1)" fill="#D8D800" font-size="12.5" text-anchor="end" >30</text>
<line x1="146" y1="168.5" x2="152" y2="168.5" stroke="#808080" stroke-width="1"/>
<text transform="translate(145,173) scale(0.85,1)" fill="#D8D800" font-size="12.5" text-anchor="end" >25</text>
<line x1="146" y1="288.5" x2="152" y2="288.5" stroke="#808080" stroke-width="1"/>
<text transform="translate(145,293) scale(0.85,1)" fill="#D8D800" font-size="12.5" text-anchor="end" >20</text>
<line x1="146" y1="408.5" x2="152" y2="408.5" stroke="#808080" stroke-width="1"/>
<text transform="translate(145,413) scale(0.85,1)" fill="#D8D800" font-size="12.5" text-anchor="end" >15</text>
<line x1="146" y1="528.5" x2="152" y2="528.5" stroke="#808080" stroke-width="1"/>
<text transform="translate(145,533) scale(0.85,1)" fill="#D8D800" font-size="12.5" text-anchor="end" >10</text>
<line x1="146" y1="648.5" x2="152" y2="648.5" stroke="#808080" stroke-width="1"/>
<text transform="translate(145,653) scale(0.85,1)" fill="#D8D800" font-size="12.5" text-anchor="end" >5</text>
<line x1="146" y1="768.5" x2="154" y2="768.5" stroke="#808080" stroke-width="1"/>
<text transform="translate(145,773) scale(0.85,1)" fill="#D8D800" font-size="12.5" text-anchor="end" >0</text>
<line x1="184" y1="48.5" x2="188" y2="48.5" stroke="#808080" stroke-width="1"/>
<text transform="translate(182,53) scale(0.85,1)" fill="#E0E040" font-size="12.5" text-anchor="end" >800</text>
<line x1="184" y1="138.5" x2="188" y2="138.5" stroke="#808080" stroke-width="1"/>
<text transform="translate(182,143) scale(0.85,1)" fill="#E0E040" font-size="12.5" text-anchor="end" >700</text>
<line x1="184" y1="228.5" x2="188" y2="228.5" stroke="#808080" stroke-width="1"/>
<text transform="translate(182,233) scale(0.85,1)" fill="#E0E040" font-size="12.5" text-anchor="end" >600</text>
<line x1="184" y1="318.5" x2="188" y2="318.5" stroke="#808080" stroke-width="1"/>
<text transform="translate(182,323) scale(0.85,1)" fill="#E0E040" font-size="12.5" text-anchor="end" >500</text>
<line x1="184" y1="408.5" x2="188" y2="408.5" stroke="#808080" stroke-width="1"/>
<text transform="translate(182,413) scale(0.85,1)" fill="#E0E040" font-size="12.5" text-anchor="end" >400</text>
<line x1="184" y1="498.5" x2="188" y2="498.5" stroke="#808080" stroke-width="1"/>
<text transform="translate(182,503) scale(0.85,1)" fill="#E0E040" font-size="12.5" text-anchor="end" >300</text>
<line x1="184" y1="588.5" x2="188" y2="588.5" stroke="#808080" stroke-width="1"/>
<text transform="translate(182,593) scale(0.85,1)" fill="#E0E040" font-size="12.5" text-anchor="end" >200</text>
<line x1="184" y1="678.5" x2="188" y2="678.5" stroke="#808080" stroke-width="1"/>
<text transform="translate(182,683) scale(0.85,1)" fill="#E0E040" font-size="12.5" text-anchor="end" >100</text>
<line x1="184" y1="768.5" x2="188" y2="768.5" stroke="#808080" stroke-width="1"/>
<text transform="translate(182,773) scale(0.85,1)" fill="#E0E040" font-size="12.5" text-anchor="end" >0</text>
<text transform="translate(20,37) scale(0.85,1)" fill="#FF0000" font-size="12.5" text-anchor="start" >°C</text>
<text transform="translate(49,37) scale(0.85,1)" fill="#000" font-size="12.5" text-anchor="start" >hPa</text>
<text transform="translate(80,37) scale(0.85,1)" fill="#008000" font-size="12.5" text-anchor="start" >km/h</text>
<text transform="translate(126,37) scale(0.85,1)" fill="#D8D800" font-size="12.5" text-anchor="start" >min</text>
<text transform="translate(151,37) scale(0.85,1)" fill="#E0E040" font-size="12.5" text-anchor="start" >W/m²</text>
<line x1="1529" y1="48.5" x2="1533" y2="48.5" stroke="#808080" stroke-width="1"/>
<text transform="translate(1535,53) scale(0.85,1)" fill="#808080" font-size="12.5" text-anchor="start" >100</text>
<line x1="1529" y1="84.5" x2="1533" y2="84.5" stroke="#808080" stroke-width="1"/>
<text transform="translate(1535,89) scale(0.85,1)" fill="#808080" font-size="12.5" text-anchor="start" >95</text>
<line x1="1529" y1="120.5" x2="1533" y2="120.5" stroke="#808080" stroke-width="1"/>
<text transform="translate(1535,125) scale(0.85,1)" fill="#808080" font-size="12.5" text-anchor="start" >90</text>
<line x1="1529" y1="156.5" x2="1533" y2="156.5" stroke="#808080" stroke-width="1"/>
<text transform="translate(1535,161) scale(0.85,1)" fill="#808080" font-size="12.5" text-anchor="start" >85</text>
<line x1="1529" y1="192.5" x2="1533" y2="192.5" stroke="#808080" stroke-width="1"/>
<text transform="translate(1535,197) scale(0.85,1)" fill="#808080" font-size="12.5" text-anchor="start" >80</text>
<line x1="1529" y1="228.5" x2="1533" y2="228.5" stroke="#808080" stroke-width="1"/>
<text transform="translate(1535,233) scale(0.85,1)" fill="#808080" font-size="12.5" text-anchor="start" >75</text>
<line x1="1529" y1="264.5" x2="1533" y2="264.5" stroke="#808080" stroke-width="1"/>
<text transform="translate(1535,269) scale(0.85,1)" fill="#808080" font-size="12.5" text-anchor="start" >70</text>
<line x1="1529" y1="300.5" x2="1533" y2="300.5" stroke="#808080" stroke-width="1"/>
<text transform="translate(1535,305) scale(0.85,1)" fill="#808080" font-size="12.5" text-anchor="start" >65</text>
<line x1="1529" y1="336.5" x2="1533" y2="336.5" stroke="#808080" stroke-width="1"/>
<text transform="translate(1535,341) scale(0.85,1)" fill="#808080" font-size="12.5" text-anchor="start" >60</text>
<line x1="1529" y1="372.5" x2="1533" y2="372.5" stroke="#808080" stroke-width="1"/>
<text transform="translate(1535,377) scale(0.85,1)" fill="#808080" font-size="12.5" text-anchor="start" >55</text>
<line x1="1529" y1="408.5" x2="1533" y2="408.5" stroke="#808080" stroke-width="1"/>
<text transform="translate(1535,413) scale(0.85,1)" fill="#808080" font-size="12.5" text-anchor="start" >50</text>
<line x1="1529" y1="444.5" x2="1533" y2="444.5" stroke="#808080" stroke-width="1"/>
<text transform="translate(1535,449) scale(0.85,1)" fill="#808080" font-size="12.5" text-anchor="start" >45</text>
<line x1="1529" y1="480.5" x2="1533" y2="480.5" stroke="#808080" stroke-width="1"/>
<text transform="translate(1535,485) scale(0.85,1)" fill="#808080" font-size="12.5" text-anchor="start" >40</text>
<line x1="1529" y1="516.5" x2="1533" y2="516.5" stroke="#808080" stroke-width="1"/>
<text transform="translate(1535,521) scale(0.85,1)" fill="#808080" font-size="12.5" text-anchor="start" >35</text>
<line x1="1529" y1="552.5" x2="1533" y2="552.5" stroke="#808080" stroke-width="1"/>
<text transform="translate(1535,557) scale(0.85,1)" fill="#808080" font-size="12.5" text-anchor="start" >30</text>
<line x1="1529" y1="588.5" x2="1533" y2="588.5" stroke="#808080" stroke-width="1"/>
<text transform="translate(1535,593) scale(0.85,1)" fill="#808080" font-size="12.5" text-anchor="start" >25</text>
<line x1="1529" y1="624.5" x2="1533" y2="624.5" stroke="#808080" stroke-width="1"/>
<text transform="translate(1535,629) scale(0.85,1)" fill="#808080" font-size="12.5" text-anchor="start" >20</text>
<line x1="1529" y1="660.5" x2="1533" y2="660.5" stroke="#808080" stroke-width="1"/>
<text transform="translate(1535,665) scale(0.85,1)" fill="#808080" font-size="12.5" text-anchor="start" >15</text>
<line x1="1529" y1="696.5" x2="1533" y2="696.5" stroke="#808080" stroke-width="1"/>
<text transform="translate(1535,701) scale(0.85,1)" fill="#808080" font-size="12.5" text-anchor="start" >10</text>
<line x1="1529" y1="732.5" x2="1533" y2="732.5" stroke="#808080" stroke-width="1"/>
<text transform="translate(1535,737) scale(0.85,1)" fill="#808080" font-size="12.5" text-anchor="start" >5</text>
<line x1="1529" y1="768.5" x2="1533" y2="768.5" stroke="#808080" stroke-width="1"/>
<text transform="translate(1535,773) scale(0.85,1)" fill="#808080" font-size="12.5" text-anchor="start" >0</text>
<line x1="1565.5" y1="48" x2="1565.5" y2="768" stroke="#808080" stroke-width="1"/>
<line x1="1561" y1="77.5" x2="1571" y2="77.5" stroke="#808080" stroke-width="1"/>
<text transform="translate(1572,82) scale(0.85,1)" fill="#0000FF" font-size="12.5" text-anchor="start" >4.8</text>
<line x1="1565" y1="106.5" x2="1571" y2="106.5" stroke="#808080" stroke-width="1"/>
<text transform="translate(1572,111) scale(0.85,1)" fill="#0000FF" font-size="12.5" text-anchor="start" >4.6</text>
<line x1="1565" y1="134.5" x2="1571" y2="134.5" stroke="#808080" stroke-width="1"/>
<text transform="translate(1572,139) scale(0.85,1)" fill="#0000FF" font-size="12.5" text-anchor="start" >4.4</text>
<line x1="1565" y1="163.5" x2="1571" y2="163.5" stroke="#808080" stroke-width="1"/>
<text transform="translate(1572,168) scale(0.85,1)" fill="#0000FF" font-size="12.5" text-anchor="start" >4.2</text>
<line x1="1565" y1="192.5" x2="1571" y2="192.5" stroke="#808080" stroke-width="1"/>
<text transform="translate(1572,197) scale(0.85,1)" fill="#0000FF" font-size="12.5" text-anchor="start" >4.0</text>
<line x1="1565" y1="221.5" x2="1571" y2="221.5" stroke="#808080" stroke-width="1"/>
<text transform="translate(1572,226) scale(0.85,1)" fill="#0000FF" font-size="12.5" text-anchor="start" >3.8</text>
<line x1="1565" y1="250.5" x2="1571" y2="250.5" stroke="#808080" stroke-width="1"/>
<text transform="translate(1572,255) scale(0.85,1)" fill="#0000FF" font-size="12.5" text-anchor="start" >3.6</text>
<line x1="1565" y1="278.5" x2="1571" y2="278.5" stroke="#808080" stroke-width="1"/>
<text transform="translate(1572,283) scale(0.85,1)" fill="#0000FF" font-size="12.5" text-anchor="start" >3.4</text>
<line x1="1565" y1="307.5" x2="1571" y2="307.5" stroke="#808080" stroke-width="1"/>
<text transform="translate(1572,312) scale(0.85,1)" fill="#0000FF" font-size="12.5" text-anchor="start" >3.2</text>
<line x1="1565" y1="336.5" x2="1571" y2="336.5" stroke="#808080" stroke-width="1"/>
<text transform="translate(1572,341) scale(0.85,1)" fill="#0000FF" font-size="12.5" text-anchor="start" >3.0</text>
<line x1="1565" y1="365.5" x2="1571" y2="365.5" stroke="#808080" stroke-width="1"/>
<text transform="translate(1572,370) scale(0.85,1)" fill="#0000FF" font-size="12.5" text-anchor="start" >2.8</text>
<line x1="1565" y1="394.5" x2="1571" y2="394.5" stroke="#808080" stroke-width="1"/>
<text transform="translate(1572,399) scale(0.85,1)" fill="#0000FF" font-size="12.5" text-anchor="start" >2.6</text>
<line x1="1565" y1="422.5" x2="1571" y2="422.5" stroke="#808080" stroke-width="1"/>
<text transform="translate(1572,427) scale(0.85,1)" fill="#0000FF" font-size="12.5" text-anchor="start" >2.4</text>
<line x1="1565" y1="451.5" x2="1571" y2="451.5" stroke="#808080" stroke-width="1"/>
<text transform="translate(1572,456) scale(0.85,1)" fill="#0000FF" font-size="12.5" text-anchor="start" >2.2</text>
<line x1="1565" y1="480.5" x2="1571" y2="480.5" stroke="#808080" stroke-width="1"/>
<text transform="translate(1572,485) scale(0.85,1)" fill="#0000FF" font-size="12.5" text-anchor="start" >2.0</text>
<line x1="1565" y1="509.5" x2="1571" y2="509.5" stroke="#808080" stroke-width="1"/>
<text transform="translate(1572,514) scale(0.85,1)" fill="#0000FF" font-size="12.5" text-anchor="start" >1.8</text>
<line x1="1565" y1="538.5" x2="1571" y2="538.5" stroke="#808080" stroke-width="1"/>
<text transform="translate(1572,543) scale(0.85,1)" fill="#0000FF" font-size="12.5" text-anchor="start" >1.6</text>
<line x1="1565" y1="566.5" x2="1571" y2="566.5" stroke="#808080" stroke-width="1"/>
<text transform="translate(1572,571) scale(0.85,1)" fill="#0000FF" font-size="12.5" text-anchor="start" >1.4</text>
<line x1="1565" y1="595.5" x2="1571" y2="595.5" stroke="#808080" stroke-width="1"/>
<text transform="translate(1572,600) scale(0.85,1)" fill="#0000FF" font-size="12.5" text-anchor="start" >1.2</text>
<line x1="1565" y1="624.5" x2="1571" y2="624.5" stroke="#808080" stroke-width="1"/>
<text transform="translate(1572,629) scale(0.85,1)" fill="#0000FF" font-size="12.5" text-anchor="start" >1.0</text>
<line x1="1565" y1="653.5" x2="1571" y2="653.5" stroke="#808080" stroke-width="1"/>
<text transform="translate(1572,658) scale(0.85,1)" fill="#0000FF" font-size="12.5" text-anchor="start" >0.8</text>
<line x1="1565" y1="682.5" x2="1571" y2="682.5" stroke="#808080" stroke-width="1"/>
<text transform="translate(1572,687) scale(0.85,1)" fill="#0000FF" font-size="12.5" text-anchor="start" >0.6</text>
<line x1="1565" y1="710.5" x2="1571" y2="710.5" stroke="#808080" stroke-width="1"/>
<text transform="translate(1572,715) scale(0.85,1)" fill="#0000FF" font-size="12.5" text-anchor="start" >0.4</text>
<line x1="1565" y1="739.5" x2="1571" y2="739.5" stroke="#808080" stroke-width="1"/>
<text transform="translate(1572,744) scale(0.85,1)" fill="#0000FF" font-size="12.5" text-anchor="start" >0.2</text>
<line x1="1561" y1="768.5" x2="1571" y2="768.5" stroke="#808080" stroke-width="1"/>
<text transform="translate(1572,773) scale(0.85,1)" fill="#0000FF" font-size="12.5" text-anchor="start" >0.0</text>
<line x1="1602.5" y1="48" x2="1602.5" y2="768" stroke="#808080" stroke-width="1"/>
<line x1="1598" y1="48.5" x2="1608" y2="48.5" stroke="#808080" stroke-width="1"/>
<line x1="1602" y1="108.5" x2="1608" y2="108.5" stroke="#808080" stroke-width="1"/>
<line x1="1602" y1="168.5" x2="1608" y2="168.5" stroke="#808080" stroke-width="1"/>
<line x1="1602" y1="228.5" x2="1608" y2="228.5" stroke="#808080" stroke-width="1"/>
<line x1="1602" y1="288.5" x2="1608" y2="288.5" stroke="#808080" stroke-width="1"/>
<line x1="1602" y1="348.5" x2="1608" y2="348.5" stroke="#808080" stroke-width="1"/>
<line x1="1602" y1="408.5" x2="1608" y2="408.5" stroke="#808080" stroke-width="1"/>
<line x1="1602" y1="468.5" x2="1608" y2="468.5" stroke="#808080" stroke-width="1"/>
<line x1="1602" y1="528.5" x2="1608" y2="528.5" stroke="#808080" stroke-width="1"/>
<line x1="1602" y1="588.5" x2="1608" y2="588.5" stroke="#808080" stroke-width="1"/>
<line x1="1602" y1="648.5" x2="1608" y2="648.5" stroke="#808080" stroke-width="1"/>
<line x1="1602" y1="708.5" x2="1608" y2="708.5" stroke="#808080" stroke-width="1"/>
<line x1="1598" y1="768.5" x2="1608" y2="768.5" stroke="#808080" stroke-width="1"/>
<text transform="translate(1609,53) scale(0.85,1)" fill="#408080" font-size="12.5" text-anchor="start" >360</text>
<text transform="translate(1629,53) scale(0.85,1)" fill="#408080" font-size="12.5" text-anchor="start" >N</text>
<text transform="translate(1609,113) scale(0.85,1)" fill="#408080" font-size="12.5" text-anchor="start" >330</text>
<text transform="translate(1609,173) scale(0.85,1)" fill="#408080" font-size="12.5" text-anchor="start" >300</text>
<text transform="translate(1609,233) scale(0.85,1)" fill="#408080" font-size="12.5" text-anchor="start" >270</text>
<text transform="translate(1628,233) scale(0.85,1)" fill="#408080" font-size="12.5" text-anchor="start" >W</text>
<text transform="translate(1609,293) scale(0.85,1)" fill="#408080" font-size="12.5" text-anchor="start" >240</text>
<text transform="translate(1609,353) scale(0.85,1)" fill="#408080" font-size="12.5" text-anchor="start" >210</text>
<text transform="translate(1609,413) scale(0.85,1)" fill="#408080" font-size="12.5" text-anchor="start" >180</text>
<text transform="translate(1630,413) scale(0.85,1)" fill="#408080" font-size="12.5" text-anchor="start" >S</text>
<text transform="translate(1609,473) scale(0.85,1)" fill="#408080" font-size="12.5" text-anchor="start" >150</text>
<text transform="translate(1609,533) scale(0.85,1)" fill="#408080" font-size="12.5" text-anchor="start" >120</text>
<text transform="translate(1609,593) scale(0.85,1)" fill="#408080" font-size="12.5" text-anchor="start" >90</text>
<text transform="translate(1627,593) scale(0.85,1)" fill="#408080" font-size="12.5" text-anchor="start" >O</text>
<text transform="translate(1609,653) scale(0.85,1)" fill="#408080" font-size="12.5" text-anchor="start" >60</text>
<text transform="translate(1609,713) scale(0.85,1)" fill="#408080" font-size="12.5" text-anchor="start" >30</text>
<text transform="translate(1609,773) scale(0.85,1)" fill="#408080" font-size="12.5" text-anchor="start" >0</text>
<text transform="translate(1627,773) scale(0.85,1)" fill="#408080" font-size="12.5" text-anchor="start" >N</text>
<line x1="1639.5" y1="48" x2="1639.5" y2="768" stroke="#808080" stroke-width="1"/>
<line x1="1635" y1="48.5" x2="1645" y2="48.5" stroke="#808080" stroke-width="1"/>
<text transform="translate(1645,53) scale(0.85,1)" fill="#A01010" font-size="12.5" text-anchor="start" >10.0</text>
<line x1="1639" y1="120.5" x2="1645" y2="120.5" stroke="#808080" stroke-width="1"/>
<text transform="translate(1645,125) scale(0.85,1)" fill="#A01010" font-size="12.5" text-anchor="start" >9.0</text>
<line x1="1639" y1="192.5" x2="1645" y2="192.5" stroke="#808080" stroke-width="1"/>
<text transform="translate(1645,197) scale(0.85,1)" fill="#A01010" font-size="12.5" text-anchor="start" >8.0</text>
<line x1="1639" y1="264.5" x2="1645" y2="264.5" stroke="#808080" stroke-width="1"/>
<text transform="translate(1645,269) scale(0.85,1)" fill="#A01010" font-size="12.5" text-anchor="start" >7.0</text>
<line x1="1639" y1="336.5" x2="1645" y2="336.5" stroke="#808080" stroke-width="1"/>
<text transform="translate(1645,341) scale(0.85,1)" fill="#A01010" font-size="12.5" text-anchor="start" >6.0</text>
<line x1="1639" y1="408.5" x2="1645" y2="408.5" stroke="#808080" stroke-width="1"/>
<text transform="translate(1645,413) scale(0.85,1)" fill="#A01010" font-size="12.5" text-anchor="start" >5.0</text>
<line x1="1639" y1="480.5" x2="1645" y2="480.5" stroke="#808080" stroke-width="1"/>
<text transform="translate(1645,485) scale(0.85,1)" fill="#A01010" font-size="12.5" text-anchor="start" >4.0</text>
<line x1="1639" y1="552.5" x2="1645" y2="552.5" stroke="#808080" stroke-width="1"/>
<text transform="translate(1645,557) scale(0.85,1)" fill="#A01010" font-size="12.5" text-anchor="start" >3.0</text>
<line x1="1639" y1="624.5" x2="1645" y2="624.5" stroke="#808080" stroke-width="1"/>
<text transform="translate(1645,629) scale(0.85,1)" fill="#A01010" font-size="12.5" text-anchor="start" >2.0</text>
<line x1="1639" y1="696.5" x2="1645" y2="696.5" stroke="#808080" stroke-width="1"/>
<text transform="translate(1645,701) scale(0.85,1)" fill="#A01010" font-size="12.5" text-anchor="start" >1.0</text>
<line x1="1635" y1="768.5" x2="1645" y2="768.5" stroke="#808080" stroke-width="1"/>
<text transform="translate(1645,773) scale(0.85,1)" fill="#A01010" font-size="12.5" text-anchor="start" >0.0</text>
<text transform="translate(1529,37) scale(0.85,1)" fill="#808080" font-size="12.5" text-anchor="start" >%</text>
<text transform="translate(1566,37) scale(0.85,1)" fill="#0000FF" font-size="12.5" text-anchor="start" >l/m²</text>
<text transform="translate(1603,37) scale(0.85,1)" fill="#408080" font-size="12.5" text-anchor="start" >°</text>
<text transform="translate(1639,37) scale(0.85,1)" fill="#A01010" font-size="12.5" text-anchor="start" >UV-I</text>
<text transform="translate(1590,16) scale(0.85,1)" fill="#FF0000" font-size="12.5" text-anchor="start" >Auf einen Blick ...</text>
<text x="840.5" y="20" fill="#000" font-size="16" text-anchor="middle" >Freitag, 10.04.2026</text>
<rect x="198.5" y="33.5" width="9" height="9" fill="#FF0000" stroke="#000" stroke-width="1"/>
<text transform="translate(212.5,42) scale(0.85,1)" fill="#FF0000" font-size="12.5" text-anchor="start" >Temperatur</text>
<rect x="293.5" y="33.5" width="9" height="9" fill="#804040" stroke="#000" stroke-width="1"/>
<text transform="translate(307.5,42) scale(0.85,1)" fill="#FF0000" font-size="12.5" text-anchor="start" >Temp. +5 cm*</text>
<rect x="388.5" y="33.5" width="9" height="9" fill="#808000" stroke="#000" stroke-width="1"/>
<text transform="translate(402.5,42) scale(0.85,1)" fill="#FF0000" font-size="12.5" text-anchor="start" >Temp. -10 cm*</text>
<rect x="483.5" y="33.5" width="9" height="9" fill="#808080" stroke="#000" stroke-width="1"/>
<text transform="translate(497.5,42) scale(0.85,1)" fill="#808080" font-size="12.5" text-anchor="start" >Feuchte A.*</text>
<rect x="578.5" y="33.5" width="9" height="9" fill="#000000" stroke="#000" stroke-width="1"/>
<text transform="translate(592.5,42) scale(0.85,1)" fill="#000000" font-size="12.5" text-anchor="start" >Luftdruck</text>
<rect x="673.5" y="33.5" width="9" height="9" fill="#0000FF" stroke="#000" stroke-width="1"/>
<text transform="translate(687.5,42) scale(0.85,1)" fill="#0000FF" font-size="12.5" text-anchor="start" >Regen</text>
<rect x="768.5" y="33.5" width="9" height="9" fill="#008000" stroke="#000" stroke-width="1"/>
<text transform="translate(782.5,42) scale(0.85,1)" fill="#008000" font-size="12.5" text-anchor="start" >Wind</text>
<rect x="863.5" y="33.5" width="9" height="9" fill="#408080" stroke="#000" stroke-width="1"/>
<text transform="translate(877.5,42) scale(0.85,1)" fill="#408080" font-size="12.5" text-anchor="start" >Richtung*</text>
<rect x="958.5" y="33.5" width="9" height="9" fill="#D8D800" stroke="#000" stroke-width="1"/>
<text transform="translate(972.5,42) scale(0.85,1)" fill="#D8D800" font-size="12.5" text-anchor="start" >Zeit Sonne</text>
<rect x="1053.5" y="33.5" width="9" height="9" fill="#A01010" stroke="#000" stroke-width="1"/>
<text transform="translate(1067.5,42) scale(0.85,1)" fill="#A01010" font-size="12.5" text-anchor="start" >UV-I</text>
<rect x="1148.5" y="33.5" width="9" height="9" fill="#E0E040" stroke="#000" stroke-width="1"/>
<text transform="translate(1162.5,42) scale(0.85,1)" fill="#E0E040" font-size="12.5" text-anchor="start" >Solarstrahlg</text>
<rect x="1243.5" y="33.5" width="9" height="9" fill="#00FFFF" stroke="#000" stroke-width="1"/>
<text transform="translate(1257.5,42) scale(0.85,1)" fill="#FF0000" font-size="12.5" text-anchor="start" >Taupunkt</text>
<rect x="1338.5" y="33.5" width="9" height="9" fill="#FF8080" stroke="#000" stroke-width="1"/>
<text transform="translate(1352.5,42) scale(0.85,1)" fill="#FF0000" font-size="12.5" text-anchor="start" >Windchill</text>
<rect x="1433.5" y="33.5" width="9" height="9" fill="#00FF40" stroke="#000" stroke-width="1"/>
<text transform="translate(1447.5,42) scale(0.85,1)" fill="#008000" font-size="12.5" text-anchor="start" >Windböen</text>
<line x1="188.5" y1="768" x2="188.5" y2="773" stroke="#808080" stroke-width="1"/>
<text transform="translate(188.5,787) scale(0.85,1)" fill="#000" font-size="12.5" text-anchor="middle" >00:00</text>
<line x1="244.5" y1="768" x2="244.5" y2="773" stroke="#808080" stroke-width="1"/>
<text transform="translate(244.5,787) scale(0.85,1)" fill="#000" font-size="12.5" text-anchor="middle" >01:00</text>
<line x1="300.5" y1="768" x2="300.5" y2="773" stroke="#808080" stroke-width="1"/>
<text transform="translate(300.5,787) scale(0.85,1)" fill="#000" font-size="12.5" text-anchor="middle" >02:00</text>
<line x1="356.5" y1="768" x2="356.5" y2="773" stroke="#808080" stroke-width="1"/>
<text transform="translate(356.5,787) scale(0.85,1)" fill="#000" font-size="12.5" text-anchor="middle" >03:00</text>
<line x1="411.5" y1="768" x2="411.5" y2="773" stroke="#808080" stroke-width="1"/>
<text transform="translate(411.5,787) scale(0.85,1)" fill="#000" font-size="12.5" text-anchor="middle" >04:00</text>
<line x1="467.5" y1="768" x2="467.5" y2="773" stroke="#808080" stroke-width="1"/>
<text transform="translate(467.5,787) scale(0.85,1)" fill="#000" font-size="12.5" text-anchor="middle" >05:00</text>
<line x1="523.5" y1="768" x2="523.5" y2="773" stroke="#808080" stroke-width="1"/>
<text transform="translate(523.5,787) scale(0.85,1)" fill="#000" font-size="12.5" text-anchor="middle" >06:00</text>
<line x1="579.5" y1="768" x2="579.5" y2="773" stroke="#808080" stroke-width="1"/>
<text transform="translate(579.5,787) scale(0.85,1)" fill="#000" font-size="12.5" text-anchor="middle" >07:00</text>
<line x1="635.5" y1="768" x2="635.5" y2="773" stroke="#808080" stroke-width="1"/>
<text transform="translate(635.5,787) scale(0.85,1)" fill="#000" font-size="12.5" text-anchor="middle" >08:00</text>
<line x1="690.5" y1="768" x2="690.5" y2="773" stroke="#808080" stroke-width="1"/>
<text transform="translate(690.5,787) scale(0.85,1)" fill="#000" font-size="12.5" text-anchor="middle" >09:00</text>
<line x1="746.5" y1="768" x2="746.5" y2="773" stroke="#808080" stroke-width="1"/>
<text transform="translate(746.5,787) scale(0.85,1)" fill="#000" font-size="12.5" text-anchor="middle" >10:00</text>
<line x1="802.5" y1="768" x2="802.5" y2="773" stroke="#808080" stroke-width="1"/>
<text transform="translate(802.5,787) scale(0.85,1)" fill="#000" font-size="12.5" text-anchor="middle" >11:00</text>
<line x1="858.5" y1="768" x2="858.5" y2="773" stroke="#808080" stroke-width="1"/>
<text transform="translate(858.5,787) scale(0.85,1)" fill="#000" font-size="12.5" text-anchor="middle" >12:00</text>
<line x1="914.5" y1="768" x2="914.5" y2="773" stroke="#808080" stroke-width="1"/>
<text transform="translate(914.5,787) scale(0.85,1)" fill="#000" font-size="12.5" text-anchor="middle" >13:00</text>
<line x1="970.5" y1="768" x2="970.5" y2="773" stroke="#808080" stroke-width="1"/>
<text transform="translate(970.5,787) scale(0.85,1)" fill="#000" font-size="12.5" text-anchor="middle" >14:00</text>
<line x1="1026.5" y1="768" x2="1026.5" y2="773" stroke="#808080" stroke-width="1"/>
<text transform="translate(1026.5,787) scale(0.85,1)" fill="#000" font-size="12.5" text-anchor="middle" >15:00</text>
<line x1="1081.5" y1="768" x2="1081.5" y2="773" stroke="#808080" stroke-width="1"/>
<text transform="translate(1081.5,787) scale(0.85,1)" fill="#000" font-size="12.5" text-anchor="middle" >16:00</text>
<line x1="1137.5" y1="768" x2="1137.5" y2="773" stroke="#808080" stroke-width="1"/>
<text transform="translate(1137.5,787) scale(0.85,1)" fill="#000" font-size="12.5" text-anchor="middle" >17:00</text>
<line x1="1193.5" y1="768" x2="1193.5" y2="773" stroke="#808080" stroke-width="1"/>
<text transform="translate(1193.5,787) scale(0.85,1)" fill="#000" font-size="12.5" text-anchor="middle" >18:00</text>
<line x1="1249.5" y1="768" x2="1249.5" y2="773" stroke="#808080" stroke-width="1"/>
<text transform="translate(1249.5,787) scale(0.85,1)" fill="#000" font-size="12.5" text-anchor="middle" >19:00</text>
<line x1="1305.5" y1="768" x2="1305.5" y2="773" stroke="#808080" stroke-width="1"/>
<text transform="translate(1305.5,787) scale(0.85,1)" fill="#000" font-size="12.5" text-anchor="middle" >20:00</text>
<line x1="1360.5" y1="768" x2="1360.5" y2="773" stroke="#808080" stroke-width="1"/>
<text transform="translate(1360.5,787) scale(0.85,1)" fill="#000" font-size="12.5" text-anchor="middle" >21:00</text>
<line x1="1416.5" y1="768" x2="1416.5" y2="773" stroke="#808080" stroke-width="1"/>
<text transform="translate(1416.5,787) scale(0.85,1)" fill="#000" font-size="12.5" text-anchor="middle" >22:00</text>
<line x1="1472.5" y1="768" x2="1472.5" y2="773" stroke="#808080" stroke-width="1"/>
<text transform="translate(1472.5,787) scale(0.85,1)" fill="#000" font-size="12.5" text-anchor="middle" >23:00</text>
<line x1="1528.5" y1="768" x2="1528.5" y2="773" stroke="#808080" stroke-width="1"/>
<text transform="translate(1528.5,787) scale(0.85,1)" fill="#000" font-size="12.5" text-anchor="middle" >24:00</text>
<line x1="187" y1="768.5" x2="1529" y2="768.5" stroke="#808080" stroke-width="1"/>
<rect x="414" y="764" width="2" height="13" fill="#808080"/>
<rect x="806" y="764" width="2" height="13" fill="#808080"/>
<rect x="546" y="764" width="2" height="13" fill="#FFFF00"/>
<rect x="1303" y="764" width="2" height="13" fill="#FFFF00"/>
<text transform="translate(11,798) scale(0.85,1)" fill="#000" font-size="12.5" text-anchor="start" >13:33</text>
<path d="M40 797 h9 v-2 h-1 v-2 h-2 v-1 h-3 v1 h-2 v2 h-1 z" fill="#FFFF00"/>
<rect x="410" y="788" width="11" height="11" fill="#000090"/>
<circle cx="412.8" cy="791.3" r="2.6" fill="#fff" shape-rendering="auto"/>
<path d="M417.5 790.5 l3 4.5 h-2 v4 h-2 v-4 h-2 z" fill="#FFFF00" shape-rendering="auto"/>
<text transform="translate(422,798) scale(0.85,1)" fill="#000" font-size="12.5" text-anchor="start" >04:03</text>
<text transform="translate(514,798) scale(0.85,1)" fill="#000" font-size="12.5" text-anchor="start" >06:26</text>
<g shape-rendering="auto"><path d="M547 789.5v9M542.5 794h9M543.6 790.6l6.8 6.8M550.4 790.6l-6.8 6.8" stroke="#FFFF80" stroke-width="1.2"/><circle cx="547" cy="794" r="3.1" fill="#FFFF00"/></g>
<rect x="802" y="788" width="11" height="11" fill="#000090"/>
<path d="M807.5 799 a2.6 2.6 0 0 1 5.2 0 z" fill="#fff" shape-rendering="auto"/>
<path d="M804.5 788 h2 v3 h2 l-3 5.5 l-3 -5.5 h2 z" fill="#FFFF00" shape-rendering="auto"/>
<text transform="translate(814,798) scale(0.85,1)" fill="#000" font-size="12.5" text-anchor="start" >11:05</text>
<text transform="translate(1271,798) scale(0.85,1)" fill="#000" font-size="12.5" text-anchor="start" >19:59</text>
<rect x="1301.5" y="791.5" width="5" height="5" fill="none" stroke="#FFFF40" stroke-width="1"/>
<rect x="1" y="800" width="1675" height="84" fill="#006FDE"/>
<rect x="1676" y="799" width="1" height="85" fill="#808080"/>
<rect x="87" y="800" width="2" height="84" fill="#fff"/>
<rect x="204" y="800" width="2" height="84" fill="#fff"/>
<rect x="322" y="800" width="2" height="84" fill="#fff"/>
<rect x="440" y="800" width="2" height="84" fill="#fff"/>
<rect x="558" y="800" width="2" height="84" fill="#fff"/>
<rect x="676" y="800" width="2" height="84" fill="#fff"/>
<rect x="794" y="800" width="2" height="84" fill="#fff"/>
<rect x="912" y="800" width="2" height="84" fill="#fff"/>
<text transform="translate(8.5,818) scale(0.91,1)" fill="#000" font-size="12.5" text-anchor="start" font-weight="bold" >Sensor</text>
<text transform="translate(8.5,834) scale(0.91,1)" fill="#000" font-size="12.5" text-anchor="start" font-weight="bold" >MinWert</text>
<text transform="translate(8.5,850) scale(0.91,1)" fill="#000" font-size="12.5" text-anchor="start" font-weight="bold" >MaxWert</text>
<text transform="translate(8.5,866) scale(0.91,1)" fill="#000" font-size="12.5" text-anchor="start" font-weight="bold" >Durchschnitt</text>
<text transform="translate(8.5,882) scale(0.91,1)" fill="#000" font-size="12.5" text-anchor="start" font-weight="bold"  letter-spacing="0.75">10.04. 23:58</text>
<text transform="translate(95,818) scale(0.91,1)" fill="#000" font-size="12.5" text-anchor="start" font-weight="bold" >Temperatur</text>
<text transform="translate(198,818) scale(0.91,1)" fill="#000" font-size="12.5" text-anchor="end" font-weight="bold" >°C</text>
<text transform="translate(101,834) scale(0.85,1)" fill="#000" font-size="12.5" text-anchor="start" >23:58</text>
<text transform="translate(198,834) scale(0.85,1)" fill="#000" font-size="12.5" text-anchor="end" >0.7</text>
<text transform="translate(101,850) scale(0.85,1)" fill="#000" font-size="12.5" text-anchor="start" >17:48</text>
<text transform="translate(198,850) scale(0.85,1)" fill="#000" font-size="12.5" text-anchor="end" >8.3</text>
<text transform="translate(198,866) scale(0.85,1)" fill="#000" font-size="12.5" text-anchor="end" >4.16</text>
<text transform="translate(198,882) scale(0.91,1)" fill="#000" font-size="12.5" text-anchor="end" font-weight="bold"  letter-spacing="0.75">0.7</text>
<text transform="translate(212,818) scale(0.91,1)" fill="#000" font-size="12.5" text-anchor="start" font-weight="bold" >Temp. +5 cm</text>
<text transform="translate(316,818) scale(0.91,1)" fill="#000" font-size="12.5" text-anchor="end" font-weight="bold" >°C</text>
<text transform="translate(218,834) scale(0.85,1)" fill="#000" font-size="12.5" text-anchor="start" >23:56</text>
<text transform="translate(316,834) scale(0.85,1)" fill="#000" font-size="12.5" text-anchor="end" >-3.3</text>
<text transform="translate(218,850) scale(0.85,1)" fill="#000" font-size="12.5" text-anchor="start" >17:14</text>
<text transform="translate(316,850) scale(0.85,1)" fill="#000" font-size="12.5" text-anchor="end" >18.3</text>
<text transform="translate(316,866) scale(0.85,1)" fill="#000" font-size="12.5" text-anchor="end" >3.44</text>
<text transform="translate(316,882) scale(0.91,1)" fill="#000" font-size="12.5" text-anchor="end" font-weight="bold"  letter-spacing="0.75">-2.8</text>
<text transform="translate(330,818) scale(0.91,1)" fill="#000" font-size="12.5" text-anchor="start" font-weight="bold" >Solarstrahlg</text>
<text transform="translate(434,818) scale(0.91,1)" fill="#000" font-size="12.5" text-anchor="end" font-weight="bold" >W/m²</text>
<text transform="translate(331,834) scale(0.85,1)" fill="#000" font-size="12.5" text-anchor="start" >Elevation</text>
<text transform="translate(434,834) scale(0.85,1)" fill="#000" font-size="12.5" text-anchor="end" >-27.913</text>
<text transform="translate(337,850) scale(0.85,1)" fill="#000" font-size="12.5" text-anchor="start" >16:12</text>
<text transform="translate(434,850) scale(0.85,1)" fill="#000" font-size="12.5" text-anchor="end" >700</text>
<text transform="translate(331,866) scale(0.85,1)" fill="#000" font-size="12.5" text-anchor="start" >Tag:5:26 h</text>
<text transform="translate(434,866) scale(0.85,1)" fill="#000" font-size="12.5" text-anchor="end" >216</text>
<text transform="translate(331,882) scale(0.85,1)" fill="#000" font-size="12.5" text-anchor="start" >dunkel</text>
<text transform="translate(434,882) scale(0.91,1)" fill="#000" font-size="12.5" text-anchor="end" font-weight="bold"  letter-spacing="0.75">0</text>
<text transform="translate(448,818) scale(0.91,1)" fill="#000" font-size="12.5" text-anchor="start" font-weight="bold" >Luftdruck</text>
<text transform="translate(552,818) scale(0.91,1)" fill="#000" font-size="12.5" text-anchor="end" font-weight="bold" >hPa</text>
<text transform="translate(455,834) scale(0.85,1)" fill="#000" font-size="12.5" text-anchor="start" >06:30</text>
<text transform="translate(552,834) scale(0.85,1)" fill="#000" font-size="12.5" text-anchor="end" >1016.1</text>
<text transform="translate(455,850) scale(0.85,1)" fill="#000" font-size="12.5" text-anchor="start" >22:50</text>
<text transform="translate(552,850) scale(0.85,1)" fill="#000" font-size="12.5" text-anchor="end" >1021.5</text>
<text transform="translate(449,866) scale(0.85,1)" fill="#000" font-size="12.5" text-anchor="start" >^1.3hPa/h</text>
<text transform="translate(552,866) scale(0.85,1)" fill="#000" font-size="12.5" text-anchor="end" >1018.9</text>
<text transform="translate(449,882) scale(0.85,1)" fill="#000" font-size="12.5" text-anchor="start" >veränderlich</text>
<text transform="translate(552,882) scale(0.91,1)" fill="#00FF00" font-size="12.5" text-anchor="end" font-weight="bold"  letter-spacing="0.75">1021.1</text>
<text transform="translate(566,818) scale(0.91,1)" fill="#000" font-size="12.5" text-anchor="start" font-weight="bold" >Windböen</text>
<text transform="translate(670,818) scale(0.91,1)" fill="#000" font-size="12.5" text-anchor="end" font-weight="bold" >km/h</text>
<text transform="translate(567,834) scale(0.85,1)" fill="#000" font-size="12.5" text-anchor="start" >Ø 10 min.</text>
<text transform="translate(670,834) scale(0.85,1)" fill="#000" font-size="12.5" text-anchor="end" >0.0</text>
<text transform="translate(573,850) scale(0.85,1)" fill="#000" font-size="12.5" text-anchor="start" >06:06</text>
<text transform="translate(670,850) scale(0.85,1)" fill="#000" font-size="12.5" text-anchor="end" >S-SW 19.3</text>
<text transform="translate(573,866) scale(0.85,1)" fill="#000" font-size="12.5" text-anchor="start" >79.1 km</text>
<text transform="translate(670,866) scale(0.85,1)" fill="#000" font-size="12.5" text-anchor="end" >3.3</text>
<text transform="translate(573,882) scale(0.85,1)" fill="#000" font-size="12.5" text-anchor="start" >0 Bft S-SW</text>
<text transform="translate(670,882) scale(0.91,1)" fill="#000" font-size="12.5" text-anchor="end" font-weight="bold"  letter-spacing="0.75">0.0</text>
<text transform="translate(684,818) scale(0.91,1)" fill="#000" font-size="12.5" text-anchor="start" font-weight="bold" >Regen</text>
<text transform="translate(788,818) scale(0.91,1)" fill="#000" font-size="12.5" text-anchor="end" font-weight="bold" >l/m²</text>
<text transform="translate(685,834) scale(0.85,1)" fill="#000" font-size="12.5" text-anchor="start" >32 min.</text>
<text transform="translate(691,850) scale(0.85,1)" fill="#000" font-size="12.5" text-anchor="start" >13:16</text>
<text transform="translate(788,850) scale(0.85,1)" fill="#000" font-size="12.5" text-anchor="end" >0.2</text>
<text transform="translate(685,866) scale(0.85,1)" fill="#000" font-size="12.5" text-anchor="start" >Gesamt:</text>
<text transform="translate(788,866) scale(0.85,1)" fill="#000" font-size="12.5" text-anchor="end" >3.2</text>
<text transform="translate(688,882) scale(0.85,1)" fill="#000" font-size="12.5" text-anchor="start" >3.2 l/m²</text>
<text transform="translate(788,882) scale(0.91,1)" fill="#000" font-size="12.5" text-anchor="end" font-weight="bold"  letter-spacing="0.75">0.0</text>
<text transform="translate(802,818) scale(0.91,1)" fill="#000" font-size="12.5" text-anchor="start" font-weight="bold" >Zeit Sonne</text>
<text transform="translate(906,818) scale(0.91,1)" fill="#000" font-size="12.5" text-anchor="end" font-weight="bold" >min</text>
<text transform="translate(809,850) scale(0.85,1)" fill="#000" font-size="12.5" text-anchor="start" >19:13</text>
<text transform="translate(906,850) scale(0.85,1)" fill="#000" font-size="12.5" text-anchor="end" >3</text>
<text transform="translate(803,866) scale(0.85,1)" fill="#000" font-size="12.5" text-anchor="start" >5:26 h</text>
<text transform="translate(906,866) scale(0.85,1)" fill="#000" font-size="12.5" text-anchor="end" >0</text>
<text transform="translate(906,882) scale(0.91,1)" fill="#000" font-size="12.5" text-anchor="end" font-weight="bold"  letter-spacing="0.75">0</text>
<text transform="translate(921,818) scale(0.85,1)" fill="#000" font-size="12.5" text-anchor="start" >Wolkenunterg</text>
<text transform="translate(1023,818) scale(0.85,1)" fill="#000" font-size="12.5" text-anchor="end" >270m</text>
<text transform="translate(921,834) scale(0.85,1)" fill="#000" font-size="12.5" text-anchor="start" >Sichtweite</text>
<text transform="translate(1023,834) scale(0.85,1)" fill="#000" font-size="12.5" text-anchor="end" >2-5km</text>
<text transform="translate(921,850) scale(0.85,1)" fill="#000" font-size="12.5" text-anchor="start" >Regen/Tag</text>
<text transform="translate(1023,850) scale(0.85,1)" fill="#000" font-size="12.5" text-anchor="end" >3.2l/m²</text>
<text transform="translate(921,866) scale(0.85,1)" fill="#000" font-size="12.5" text-anchor="start" >Neumond</text>
<text transform="translate(1023,866) scale(0.85,1)" fill="#000" font-size="12.5" text-anchor="end" >17.04.26</text>
<text transform="translate(921,882) scale(0.85,1)" fill="#000" font-size="12.5" text-anchor="start" >Vollmond</text>
<text transform="translate(1023,882) scale(0.85,1)" fill="#000" font-size="12.5" text-anchor="end" >01.05.26</text>
</svg>
</body></html>
